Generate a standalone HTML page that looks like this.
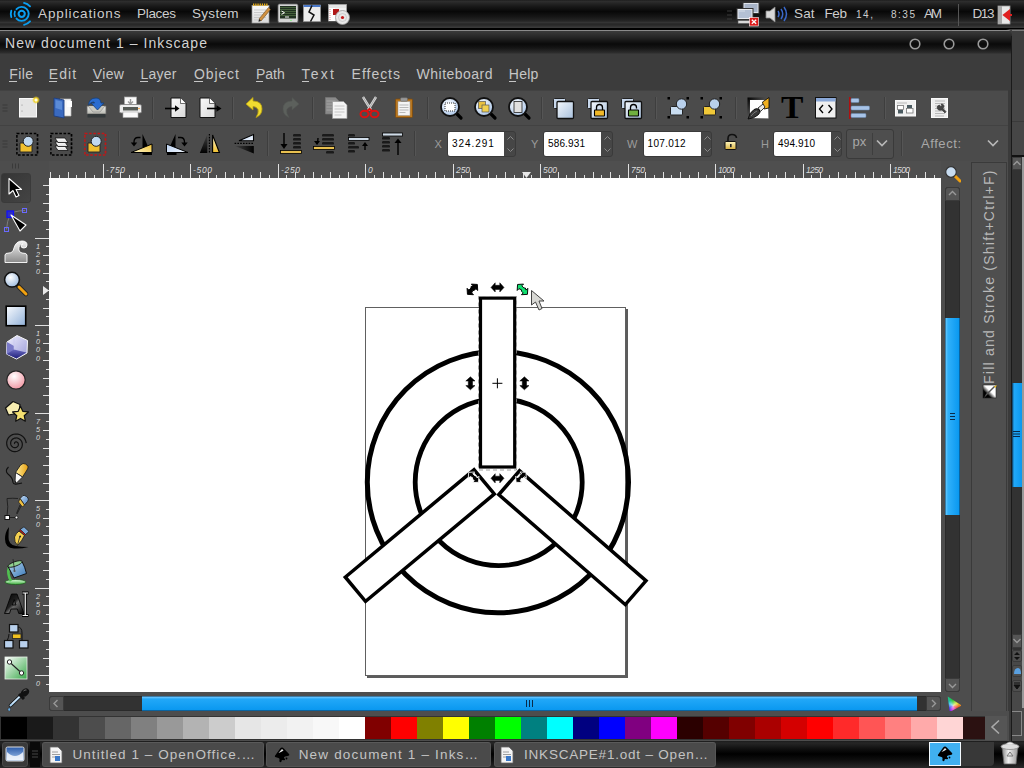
<!DOCTYPE html>
<html><head><meta charset="utf-8">
<style>
*{margin:0;padding:0;box-sizing:border-box}
html,body{width:1024px;height:768px;overflow:hidden;background:#404040;font-family:"Liberation Sans",sans-serif}
.a{position:absolute;display:block}
.t{position:absolute;white-space:nowrap;line-height:1}
</style></head><body>
<div class="a" style="left:0px;top:0px;width:1024px;height:29px;background:linear-gradient(#1f1f1f 0px,#2d2d2d 1.5px,#262626 3px,#161616 7px,#080808 11.5px,#141414 16px,#252525 21px,#343434 22.5px,#262626 24px,#2c2c2c 25.5px,#3a3a3a 27.5px,#000 28px,#000 29px)"></div>
<svg class="a" style="left:4px;top:0px" width="32" height="28" viewBox="0 0 32 28"><g fill="none" stroke="#0a9ef0" stroke-linecap="round">
<circle cx="17.7" cy="13.85" r="3.1" stroke-width="2.1"/>
<path d="M12.50 9.17 A7.0 7.0 0 1 1 12.50 18.53" stroke-width="1.9"/>
<path d="M20.03 2.89 A11.2 11.2 0 0 1 26.02 6.36" stroke-width="1.9"/>
<path d="M26.02 21.34 A11.2 11.2 0 0 1 20.03 24.81" stroke-width="1.9"/>
<path d="M7.28 17.04 A10.9 10.9 0 0 1 7.28 10.66" stroke-width="1.9"/>
<path d="M10.93 16.31 A7.2 7.2 0 0 1 10.93 11.39" stroke-width="1.7"/>
</g></svg>
<div class="t" style="left:38.00px;top:6.57px;font-size:13.5px;color:#cdcdcd;letter-spacing:0.882px;font-family:'Liberation Sans',sans-serif;">Applications</div>
<div class="t" style="left:137.00px;top:6.57px;font-size:13.5px;color:#cdcdcd;letter-spacing:-0.300px;font-family:'Liberation Sans',sans-serif;">Places</div>
<div class="t" style="left:192.00px;top:6.57px;font-size:13.5px;color:#cdcdcd;letter-spacing:0.300px;font-family:'Liberation Sans',sans-serif;">System</div>
<svg class="a" style="left:250px;top:2px" width="22" height="23" viewBox="0 0 22 23"><defs><linearGradient id="np" x1="0" y1="0" x2="0" y2="1"><stop offset="0" stop-color="#fafafa"/><stop offset="1" stop-color="#d8d8d8"/></linearGradient></defs>
<rect x="2" y="3.5" width="17" height="17.5" fill="url(#np)" stroke="#999" stroke-width="0.7"/>
<path d="M3 2.8 h15" stroke="#e8b020" stroke-width="2.6" stroke-dasharray="1.3 0.9"/>
<path d="M4 8h12M4 10.5h12M4 13h12M4 15.5h12M4 18h8" stroke="#bbb" stroke-width="0.7"/>
<path d="M9 17 L18.5 5.5 L20.5 7.5 L11 19 Z" fill="#d09040" stroke="#6a4a20" stroke-width="0.6"/><path d="M9 17 L11 19 L8.5 19.8Z" fill="#222"/></svg>
<svg class="a" style="left:277px;top:3px" width="22" height="21" viewBox="0 0 22 21"><rect x="1" y="1" width="20" height="18.5" rx="1.5" fill="#d4d4d4" stroke="#666" stroke-width="0.8"/>
<rect x="3" y="3" width="16" height="12.5" fill="#203020"/>
<path d="M3 4.5h16M3 6.5h16M3 8.5h16M3 10.5h16M3 12.5h16" stroke="#5a7a4a" stroke-width="0.9" opacity="0.7"/>
<path d="M4.5 8 l3 1.7 -3 1.7" stroke="#fff" stroke-width="1" fill="none"/><path d="M8 14h4" stroke="#fff" stroke-width="1"/>
<circle cx="14" cy="17.3" r="0.6" fill="#4f4"/></svg>
<svg class="a" style="left:302px;top:4px" width="20" height="19" viewBox="0 0 20 19"><rect x="1.5" y="1" width="17" height="16.5" fill="#ececec" stroke="#999" stroke-width="0.7"/>
<rect x="1.5" y="1" width="17" height="2" fill="#4a78c8"/>
<path d="M10 1.5 L7 8 L12 11 L8.5 17.5" stroke="#111" stroke-width="1.5" fill="none"/></svg>
<svg class="a" style="left:327px;top:3px" width="24" height="23" viewBox="0 0 24 23"><rect x="1.5" y="1.5" width="18" height="16.5" fill="#f0f0f0" stroke="#aaa" stroke-width="0.7"/>
<path d="M2 5 H8 V18 H2Z" fill="#fff"/><path d="M2 2 H19 V5 H2Z" fill="#e4e4e4"/>
<rect x="6" y="6" width="6" height="6" fill="#b01818"/>
<path d="M3 6V17" stroke="#c04040" stroke-width="0.6" stroke-dasharray="1 1"/>
<circle cx="15.5" cy="14.5" r="7" fill="#e8e8e8" stroke="#999" stroke-width="0.8"/>
<circle cx="15.5" cy="14.5" r="4" fill="none" stroke="#bbb" stroke-width="0.6"/>
<circle cx="15.5" cy="14.5" r="1.6" fill="#c01818"/></svg>
<svg class="a" style="left:726px;top:8px" width="8" height="14" viewBox="0 0 8 14"><path d="M1 3h5M1 7h5M1 11h5" stroke="#3a3a3a" stroke-width="1.2"/></svg>
<svg class="a" style="left:735px;top:1px" width="28" height="26" viewBox="0 0 28 26"><rect x="8" y="1.5" width="16" height="11" fill="#dfe3ea" stroke="#333" stroke-width="1"/>
<rect x="9.5" y="3" width="13" height="8" fill="#a8b4c8"/>
<rect x="2" y="7.5" width="16" height="11" fill="#e8ebf0" stroke="#333" stroke-width="1"/>
<rect x="3.5" y="9" width="13" height="8" fill="#b4c0d4"/>
<path d="M4 10 L10 10" stroke="#fff" stroke-width="0.8" opacity="0.6"/>
<rect x="3" y="19.5" width="14" height="3" fill="#d8d8d8" stroke="#555" stroke-width="0.6"/>
<rect x="14.5" y="16.5" width="9" height="8.5" fill="#dd1a1a" stroke="#fff" stroke-width="0.6"/>
<path d="M16.8 18.8 l4.4 4 M21.2 18.8 l-4.4 4" stroke="#fff" stroke-width="1.3"/></svg>
<svg class="a" style="left:765px;top:6px" width="23" height="17" viewBox="0 0 23 17"><path d="M1 5 h4 l5 -4 v15 l-5 -4 h-4 z" fill="#d8d8d8" stroke="#888" stroke-width="0.8"/>
<path d="M13 5 q2 3 0 6 M16 3 q3.5 5 0 10 M19 1 q5 7 0 14" stroke="#3a68c8" stroke-width="1.5" fill="none"/></svg>
<div class="t" style="left:794.00px;top:6.57px;font-size:13.5px;color:#cdcdcd;letter-spacing:0.125px;font-family:'Liberation Sans',sans-serif;">Sat</div>
<div class="t" style="left:824.50px;top:6.57px;font-size:13.5px;color:#cdcdcd;letter-spacing:-0.375px;font-family:'Liberation Sans',sans-serif;">Feb</div>
<div class="t" style="left:856.00px;top:10.34px;font-size:10px;color:#cdcdcd;letter-spacing:1.550px;font-family:'Liberation Sans',sans-serif;">14,</div>
<div class="t" style="left:891.00px;top:10.34px;font-size:10px;color:#cdcdcd;letter-spacing:1.517px;font-family:'Liberation Sans',sans-serif;">8:35</div>
<div class="t" style="left:924.00px;top:6.57px;font-size:13.5px;color:#cdcdcd;letter-spacing:-2.250px;font-family:'Liberation Sans',sans-serif;">AM</div>
<div class="a" style="left:958px;top:4px;width:1px;height:22px;background:#555"></div>
<div class="t" style="left:972.50px;top:6.57px;font-size:13.5px;color:#cdcdcd;letter-spacing:-1.375px;font-family:'Liberation Sans',sans-serif;">D13</div>
<svg class="a" style="left:997px;top:5px" width="17" height="20" viewBox="0 0 17 20"><rect x="1" y="1" width="12" height="18" fill="#e8e8e8" stroke="#999" stroke-width="0.8"/>
<rect x="1" y="1" width="4" height="18" fill="#a8a8a8"/>
<path d="M15 10 h-6 M12 6 l-5 4 5 4 z" stroke="#e02020" fill="#e02020" stroke-width="2"/></svg>
<div class="a" style="left:0px;top:29px;width:1012px;height:25px;background:linear-gradient(#000 0px,#000 1px,#8a8a8a 1px,#8a8a8a 2px,#3a3a3a 2px,#262626 8px,#0a0a0a 15px,#151515 19px,#2e2e2e 24px,#3c3c3c 25px);border-top-right-radius:6px"></div>
<div class="t" style="left:5.00px;top:36.45px;font-size:14px;color:#d2d2d2;letter-spacing:1.056px;font-family:'Liberation Sans',sans-serif;">New document 1 – Inkscape</div>
<svg class="a" style="left:908px;top:37px" width="14" height="14" viewBox="0 0 14 14"><circle cx="7" cy="7" r="4.8" fill="none" stroke="#9a9a9a" stroke-width="1.6"/></svg>
<svg class="a" style="left:942px;top:37px" width="14" height="14" viewBox="0 0 14 14"><circle cx="7" cy="7" r="4.8" fill="none" stroke="#9a9a9a" stroke-width="1.6"/></svg>
<svg class="a" style="left:976px;top:37px" width="14" height="14" viewBox="0 0 14 14"><circle cx="7" cy="7" r="4.8" fill="none" stroke="#9a9a9a" stroke-width="1.6"/></svg>
<div class="a" style="left:1012px;top:29px;width:12px;height:712px;background:#464646"></div>
<div class="a" style="left:1012px;top:30px;width:12px;height:1px;background:#7a7a7a"></div>
<div class="a" style="left:1012px;top:31px;width:12px;height:59px;background:#3e3e3e"></div>
<div class="a" style="left:0px;top:54px;width:1011px;height:36px;background:#3c3c3c"></div>
<div class="t" style="left:9.30px;top:67.15px;font-size:14px;color:#c6c6c6;letter-spacing:0.383px;font-family:'Liberation Sans',sans-serif;">File</div>
<div class="t" style="left:48.80px;top:67.15px;font-size:14px;color:#c6c6c6;letter-spacing:1.100px;font-family:'Liberation Sans',sans-serif;">Edit</div>
<div class="t" style="left:92.80px;top:67.15px;font-size:14px;color:#c6c6c6;letter-spacing:0.350px;font-family:'Liberation Sans',sans-serif;">View</div>
<div class="t" style="left:140.40px;top:67.15px;font-size:14px;color:#c6c6c6;letter-spacing:0.225px;font-family:'Liberation Sans',sans-serif;">Layer</div>
<div class="t" style="left:194.00px;top:67.15px;font-size:14px;color:#c6c6c6;letter-spacing:0.870px;font-family:'Liberation Sans',sans-serif;">Object</div>
<div class="t" style="left:256.00px;top:67.15px;font-size:14px;color:#c6c6c6;letter-spacing:-0.033px;font-family:'Liberation Sans',sans-serif;">Path</div>
<div class="t" style="left:301.60px;top:67.15px;font-size:14px;color:#c6c6c6;letter-spacing:2.167px;font-family:'Liberation Sans',sans-serif;">Text</div>
<div class="t" style="left:351.60px;top:67.15px;font-size:14px;color:#c6c6c6;letter-spacing:0.975px;font-family:'Liberation Sans',sans-serif;">Effects</div>
<div class="t" style="left:416.60px;top:67.15px;font-size:14px;color:#c6c6c6;letter-spacing:0.478px;font-family:'Liberation Sans',sans-serif;">Whiteboard</div>
<div class="t" style="left:508.80px;top:67.15px;font-size:14px;color:#c6c6c6;letter-spacing:0.267px;font-family:'Liberation Sans',sans-serif;">Help</div>
<div class="a" style="left:9.3px;top:80.5px;width:7.699999999999999px;height:1.2px;background:#c6c6c6"></div>
<div class="a" style="left:48.8px;top:80.5px;width:7.800000000000004px;height:1.2px;background:#c6c6c6"></div>
<div class="a" style="left:92.8px;top:80.5px;width:9.200000000000003px;height:1.2px;background:#c6c6c6"></div>
<div class="a" style="left:140.4px;top:80.5px;width:7.599999999999994px;height:1.2px;background:#c6c6c6"></div>
<div class="a" style="left:194px;top:80.5px;width:9px;height:1.2px;background:#c6c6c6"></div>
<div class="a" style="left:256px;top:80.5px;width:7px;height:1.2px;background:#c6c6c6"></div>
<div class="a" style="left:301.6px;top:80.5px;width:7.399999999999977px;height:1.2px;background:#c6c6c6"></div>
<div class="a" style="left:380px;top:80.5px;width:6px;height:1.2px;background:#c6c6c6"></div>
<div class="a" style="left:477px;top:80.5px;width:6px;height:1.2px;background:#c6c6c6"></div>
<div class="a" style="left:508.8px;top:80.5px;width:7.199999999999989px;height:1.2px;background:#c6c6c6"></div>
<div class="a" style="left:0px;top:90px;width:1008px;height:35px;background:#4b4b4b;border-top:1px solid #424242"></div>
<div class="a" style="left:0px;top:125px;width:1008px;height:37px;background:#4b4b4b;border-top:1px solid #424242;border-bottom:1px solid #404040"></div>
<svg class="a" style="left:2px;top:104px" width="6" height="8" viewBox="0 0 6 8"><path d="M0.5 1h5M0.5 4h5M0.5 7h5" stroke="#3a3a3a" stroke-width="1"/></svg>
<svg class="a" style="left:2px;top:140px" width="6" height="8" viewBox="0 0 6 8"><path d="M0.5 1h5M0.5 4h5M0.5 7h5" stroke="#3a3a3a" stroke-width="1"/></svg>
<div class="a" style="left:152px;top:97px;width:1px;height:22px;background:#3e3e3e;box-shadow:1px 0 0 #555"></div>
<div class="a" style="left:232px;top:97px;width:1px;height:22px;background:#3e3e3e;box-shadow:1px 0 0 #555"></div>
<div class="a" style="left:312px;top:97px;width:1px;height:22px;background:#3e3e3e;box-shadow:1px 0 0 #555"></div>
<div class="a" style="left:427px;top:97px;width:1px;height:22px;background:#3e3e3e;box-shadow:1px 0 0 #555"></div>
<div class="a" style="left:541px;top:97px;width:1px;height:22px;background:#3e3e3e;box-shadow:1px 0 0 #555"></div>
<div class="a" style="left:655px;top:97px;width:1px;height:22px;background:#3e3e3e;box-shadow:1px 0 0 #555"></div>
<div class="a" style="left:735px;top:97px;width:1px;height:22px;background:#3e3e3e;box-shadow:1px 0 0 #555"></div>
<div class="a" style="left:884px;top:97px;width:1px;height:22px;background:#3e3e3e;box-shadow:1px 0 0 #555"></div>
<svg class="a" style="left:17px;top:96px" width="24" height="24" viewBox="0 0 24 24"><defs><radialGradient id="glow"><stop offset="0" stop-color="#fff8a0"/><stop offset="0.5" stop-color="#f0d020"/><stop offset="1" stop-color="#f0d020" stop-opacity="0"/></radialGradient></defs>
<rect x="2.5" y="2.5" width="17" height="18.5" fill="#e4e4e4" stroke="#fafafa" stroke-width="1"/>
<circle cx="5" cy="9" r="0.6" fill="#888"/><circle cx="5" cy="15" r="0.6" fill="#888"/>
<circle cx="19" cy="4" r="4" fill="url(#glow)"/><circle cx="19" cy="4" r="1.5" fill="#fffce0"/></svg>
<svg class="a" style="left:52px;top:96px" width="22" height="23" viewBox="0 0 22 23"><path d="M8 3 h11 v17 h-11 z" fill="#f8f8f8" stroke="#bbb" stroke-width="0.7"/>
<rect x="15" y="5" width="5" height="6" fill="#fff"/>
<path d="M2 2 L12 4 L12 22 L2 20 Z" fill="#3a6ac0" stroke="#1e3e80" stroke-width="0.9"/>
<path d="M3.5 4 L10 5.5 L10 14 L3.5 12 Z" fill="#6a9ae0" opacity="0.7"/></svg>
<svg class="a" style="left:85px;top:96px" width="23" height="23" viewBox="0 0 23 23"><defs><linearGradient id="svt" x1="0" y1="0" x2="0" y2="1"><stop offset="0" stop-color="#f0f0ec"/><stop offset="1" stop-color="#b8b8b0"/></linearGradient></defs>
<path d="M2 10 h19 v8 h-19 z" fill="url(#svt)" stroke="#666" stroke-width="0.8"/>
<path d="M3 10 l5 6 h7 l5 -6" fill="#c8c8c0" stroke="#888" stroke-width="0.6"/>
<rect x="2.5" y="18" width="18" height="3.5" rx="0.5" fill="#33393b"/>
<path d="M3.5 9 Q4 2 11 2 Q15.5 2 16 7 L19 7 L12.5 14 L6 7 L9.5 7 Q9 5.5 8 6 Q5 7 3.5 9 Z" fill="#2a6cd0" stroke="#15407a" stroke-width="0.8" stroke-linejoin="round"/></svg>
<svg class="a" style="left:118px;top:96px" width="25" height="23" viewBox="0 0 25 23"><rect x="6.5" y="1" width="12" height="9" fill="#fafafa" stroke="#aaa" stroke-width="0.7"/>
<path d="M12.5 3 v4.5 M10 5.5 l2.5 2.5 2.5 -2.5" stroke="#999" stroke-width="1.4" fill="none"/>
<rect x="1.5" y="8.5" width="22" height="8.5" rx="1.5" fill="#ececec" stroke="#777" stroke-width="0.8"/>
<rect x="5" y="11" width="15" height="3.5" fill="#555a55"/>
<rect x="5" y="16" width="15" height="5.5" fill="#fafafa" stroke="#aaa" stroke-width="0.6"/>
<circle cx="21" cy="12.5" r="0.7" fill="#f80"/></svg>
<svg class="a" style="left:163px;top:96px" width="25" height="24" viewBox="0 0 25 24"><defs><linearGradient id="pg" x1="0" y1="0" x2="1" y2="1"><stop offset="0" stop-color="#fafafa"/><stop offset="1" stop-color="#d8d8d8"/></linearGradient></defs>
<path d="M8 2 h9.5 l5.5 5.5 v14 h-15 z" fill="url(#pg)" stroke="#111" stroke-width="1"/>
<path d="M17.5 2 v5.5 h5.5" fill="#fff" stroke="#333" stroke-width="0.7"/>
<path d="M2 12.5 h12" stroke="#000" stroke-width="1.6"/><path d="M16.5 12.5 l-4.5 -3.3 v6.6z" fill="#000"/></svg>
<svg class="a" style="left:198px;top:96px" width="25" height="24" viewBox="0 0 25 24"><path d="M2 2 h9.5 l5.5 5.5 v14 h-15 z" fill="url(#pg)" stroke="#111" stroke-width="1"/>
<path d="M11.5 2 v5.5 h5.5" fill="#fff" stroke="#333" stroke-width="0.7"/>
<path d="M9 12.5 h10" stroke="#000" stroke-width="1.6"/><path d="M23.5 12.5 l-5 -3.3 v6.6z" fill="#000"/></svg>
<svg class="a" style="left:244px;top:96px" width="21" height="23" viewBox="0 0 21 23"><path d="M2 8 L9 1.5 L9 5 Q18 5 18 13 Q18 19 12 21.5 Q15 17 14 13.5 Q12.5 10.5 9 10.5 L9 14 Z" fill="#f0dc30" stroke="#b8a010" stroke-width="0.8"/></svg>
<svg class="a" style="left:281px;top:96px" width="20" height="23" viewBox="0 0 20 23"><path d="M18 8 L11 1.5 L11 5 Q2 5 2 13 Q2 19 8 21.5 Q5 17 6 13.5 Q7.5 10.5 11 10.5 L11 14 Z" fill="#5c605c" stroke="#525552" stroke-width="0.6"/></svg>
<svg class="a" style="left:324px;top:96px" width="25" height="24" viewBox="0 0 25 24"><path d="M1.5 1.5 h10 l3 3 v13.5 h-13 z" fill="#8a8a8a" stroke="#777" stroke-width="0.7"/>
<path d="M2.5 5h9M2.5 8h9M2.5 11h9M2.5 14h9" stroke="#aaa" stroke-width="0.8"/>
<path d="M8.5 5.5 h11 l3.5 3.5 v13.5 h-14.5 z" fill="#f4f4f4" stroke="#999" stroke-width="0.7"/>
<path d="M10.5 10h10M10.5 13h10M10.5 16h10M10.5 19h7" stroke="#bbb" stroke-width="0.8"/></svg>
<svg class="a" style="left:359px;top:96px" width="21" height="23" viewBox="0 0 21 23"><path d="M4 1 L12 14 M17 1 L9 14" stroke="#d8d8d8" stroke-width="2.4"/>
<path d="M4 1 L12 14 M17 1 L9 14" stroke="#888" stroke-width="0.6"/>
<ellipse cx="5.5" cy="18" rx="4" ry="3.3" fill="none" stroke="#dd1010" stroke-width="2"/>
<ellipse cx="15.5" cy="18" rx="4" ry="3.3" fill="none" stroke="#dd1010" stroke-width="2"/>
<path d="M8 15 L10.5 13 L13 15" stroke="#dd1010" stroke-width="2" fill="none"/></svg>
<svg class="a" style="left:394px;top:97px" width="20" height="22" viewBox="0 0 20 22"><rect x="1.5" y="2" width="17" height="18.5" rx="1" fill="#b8761e" stroke="#7a4a10" stroke-width="0.8"/>
<rect x="4" y="4.5" width="12" height="14" fill="#f4f4f4" stroke="#999" stroke-width="0.5"/>
<rect x="6.5" y="0.7" width="7" height="3.5" rx="1" fill="#999" stroke="#666" stroke-width="0.6"/>
<path d="M5.5 8h9M5.5 10.5h9M5.5 13h9M5.5 15.5h6" stroke="#aaa" stroke-width="0.8"/></svg>
<svg class="a" style="left:438px;top:94.5px" width="26" height="26" viewBox="0 0 26 26"><defs><radialGradient id="zg450" cx="0.4" cy="0.35" r="0.7"><stop offset="0" stop-color="#ffffff"/><stop offset="1" stop-color="#a8c4e8"/></radialGradient></defs>
<path d="M18.5 18.5 L23 23" stroke="#000" stroke-width="3.2" stroke-linecap="round"/>
<circle cx="12" cy="12" r="9" fill="url(#zg450)" stroke="#111" stroke-width="1.8"/><rect x="7" y="8" width="10" height="8" fill="#fff" stroke="#000" stroke-width="0.8" stroke-dasharray="1 1"/></svg>
<svg class="a" style="left:472px;top:94.5px" width="26" height="26" viewBox="0 0 26 26"><defs><radialGradient id="zg484" cx="0.4" cy="0.35" r="0.7"><stop offset="0" stop-color="#ffffff"/><stop offset="1" stop-color="#a8c4e8"/></radialGradient></defs>
<path d="M18.5 18.5 L23 23" stroke="#000" stroke-width="3.2" stroke-linecap="round"/>
<circle cx="12" cy="12" r="9" fill="url(#zg484)" stroke="#111" stroke-width="1.8"/><rect x="6.5" y="6.5" width="7" height="7" fill="#e8c040" stroke="#555" stroke-width="0.7"/><rect x="10" y="10" width="7" height="7" fill="#f0d050" stroke="#555" stroke-width="0.7"/></svg>
<svg class="a" style="left:506px;top:94.5px" width="26" height="26" viewBox="0 0 26 26"><defs><radialGradient id="zg518" cx="0.4" cy="0.35" r="0.7"><stop offset="0" stop-color="#ffffff"/><stop offset="1" stop-color="#a8c4e8"/></radialGradient></defs>
<path d="M18.5 18.5 L23 23" stroke="#000" stroke-width="3.2" stroke-linecap="round"/>
<circle cx="12" cy="12" r="9" fill="url(#zg518)" stroke="#111" stroke-width="1.8"/><rect x="8" y="6.5" width="8" height="11" fill="#e0e0e0" stroke="#222" stroke-width="0.8"/></svg>
<svg class="a" style="left:552px;top:96px" width="24" height="24" viewBox="0 0 24 24"><defs><linearGradient id="sq552" x1="0" y1="0" x2="1" y2="1"><stop offset="0" stop-color="#f4f8fc"/><stop offset="1" stop-color="#a8c0dc"/></linearGradient></defs>
<rect x="1.5" y="2.5" width="12" height="10" rx="1" fill="#c8d8ec" stroke="#222" stroke-width="1"/>
<rect x="5" y="5.5" width="16.5" height="17" rx="1" fill="url(#sq552)" stroke="#111" stroke-width="1.3"/></svg>
<svg class="a" style="left:586px;top:96px" width="24" height="24" viewBox="0 0 24 24"><defs><linearGradient id="sq586" x1="0" y1="0" x2="1" y2="1"><stop offset="0" stop-color="#f4f8fc"/><stop offset="1" stop-color="#a8c0dc"/></linearGradient></defs>
<rect x="1.5" y="2.5" width="12" height="10" rx="1" fill="#c8d8ec" stroke="#222" stroke-width="1"/>
<rect x="5" y="5.5" width="16.5" height="17" rx="1" fill="url(#sq586)" stroke="#111" stroke-width="1.3"/><rect x="8.5" y="14" width="10" height="6" rx="0.5" fill="#f0b828" stroke="#000" stroke-width="1.1"/><path d="M10.5 14 v-2.5 a3 3 0 0 1 6 0 v2.5" fill="none" stroke="#000" stroke-width="1.3"/></svg>
<svg class="a" style="left:620px;top:96px" width="24" height="24" viewBox="0 0 24 24"><defs><linearGradient id="sq620" x1="0" y1="0" x2="1" y2="1"><stop offset="0" stop-color="#f4f8fc"/><stop offset="1" stop-color="#a8c0dc"/></linearGradient></defs>
<rect x="1.5" y="2.5" width="12" height="10" rx="1" fill="#c8d8ec" stroke="#222" stroke-width="1"/>
<rect x="5" y="5.5" width="16.5" height="17" rx="1" fill="url(#sq620)" stroke="#111" stroke-width="1.3"/><rect x="8.5" y="14" width="10" height="6" rx="0.5" fill="#70b040" stroke="#000" stroke-width="1.1"/><path d="M10.5 14 v-2.5 a3 3 0 0 1 6 0 v1" fill="none" stroke="#000" stroke-width="1.3"/></svg>
<svg class="a" style="left:667px;top:96px" width="24" height="24" viewBox="0 0 24 24"><g fill="#000"><rect x="0.5" y="1" width="2.5" height="2.5"/><rect x="19.5" y="1" width="2.5" height="2.5"/><rect x="0.5" y="20" width="2.5" height="2.5"/><rect x="19.5" y="20" width="2.5" height="2.5"/></g>
<rect x="3.5" y="10.5" width="12" height="8.5" rx="1" fill="#c8dcf0" stroke="#222" stroke-width="1"/>
<circle cx="14.5" cy="8" r="5.2" fill="#b8d0ec" stroke="#222" stroke-width="1"/></svg>
<svg class="a" style="left:700px;top:96px" width="24" height="24" viewBox="0 0 24 24"><g fill="#000"><rect x="0.5" y="1" width="2.5" height="2.5"/><rect x="19.5" y="1" width="2.5" height="2.5"/><rect x="0.5" y="20" width="2.5" height="2.5"/><rect x="19.5" y="20" width="2.5" height="2.5"/></g>
<rect x="3.5" y="10.5" width="12" height="8.5" rx="1" fill="#f0c838" stroke="#222" stroke-width="1"/>
<circle cx="14.5" cy="8" r="5.2" fill="#b8d0ec" stroke="#222" stroke-width="1"/></svg>
<svg class="a" style="left:746px;top:96px" width="25" height="24" viewBox="0 0 25 24"><defs><linearGradient id="fsf" x1="0" y1="0" x2="1" y2="1"><stop offset="0" stop-color="#000"/><stop offset="0.5" stop-color="#555"/><stop offset="1" stop-color="#ddd"/></linearGradient></defs>
<rect x="1.5" y="1.5" width="21" height="21" fill="url(#fsf)"/>
<rect x="4" y="4" width="18" height="18" fill="#fff"/>
<path d="M1.5 22.5 L22.5 1.5 L22.5 14 Q16 20 11 22.5 Z" fill="#111" opacity="0.0"/>
<path d="M16.5 6 L23 1.5 L23 12 L18 13 Z" fill="#f0b020" stroke="#000" stroke-width="0.8"/>
<path d="M12 12 L17 8 L19 11 L14.5 15.5 Z" fill="#e8e8e8" stroke="#222" stroke-width="0.9"/>
<path d="M2 23 Q3 17 8 13.5 Q11 11.5 13.5 14 Q15 16.5 12 19 Q8 22.5 2 23 Z" fill="#3a3a3a" stroke="#000" stroke-width="0.8"/>
<path d="M5 20 Q8 16 11 15" stroke="#888" stroke-width="0.8" fill="none"/></svg>
<div class="t" style="left:780.80px;top:91.76px;font-size:31px;color:#000;letter-spacing:0.000px;font-family:'Liberation Serif',serif;font-weight:bold;transform:scaleX(1.08);transform-origin:0 0">T</div>
<svg class="a" style="left:814px;top:96px" width="24" height="24" viewBox="0 0 24 24"><rect x="1.5" y="1.5" width="20.5" height="20.5" fill="#f0f0f0" stroke="#111" stroke-width="1"/>
<rect x="2" y="2" width="19.5" height="3.5" fill="#8aa8d8"/>
<path d="M9 9 L5.5 13 L9 17 M14.5 9 L18 13 L14.5 17" fill="none" stroke="#000" stroke-width="1.3"/></svg>
<svg class="a" style="left:848px;top:96px" width="24" height="24" viewBox="0 0 24 24"><rect x="1" y="1" width="1.6" height="22" fill="#b01010"/>
<rect x="3" y="2.5" width="8" height="4" rx="1" fill="#a8c4e8" stroke="#6a88b0" stroke-width="0.5"/>
<rect x="3" y="10" width="18.5" height="4" rx="1" fill="#a8c4e8" stroke="#6a88b0" stroke-width="0.5"/>
<rect x="3" y="17.5" width="15" height="4" rx="1" fill="#a8c4e8" stroke="#6a88b0" stroke-width="0.5"/></svg>
<svg class="a" style="left:894px;top:99px" width="24" height="19" viewBox="0 0 24 19"><rect x="1.5" y="1.5" width="20" height="15.5" fill="#f0f0f0" stroke="#fafafa" stroke-width="1"/>
<rect x="3" y="3" width="10" height="2" fill="#d4d4d4"/>
<rect x="3.5" y="6.5" width="6" height="4" fill="#fff" stroke="#777" stroke-width="0.8"/>
<rect x="4" y="11" width="5" height="3.5" fill="#4a5a60"/>
<rect x="13" y="6" width="5" height="3" fill="#4a5a60"/>
<rect x="12.5" y="9.5" width="6.5" height="4.5" fill="#fff" stroke="#777" stroke-width="0.8"/></svg>
<svg class="a" style="left:930px;top:97px" width="20" height="22" viewBox="0 0 20 22"><rect x="1.5" y="1.5" width="16" height="19" fill="#eeeeee" stroke="#fafafa" stroke-width="1"/>
<path d="M5 4h10M5 6.5h10M5 9h10M5 11.5h10M5 14h10M5 16.5h10M5 19h9" stroke="#aaa" stroke-width="0.8"/>
<path d="M7 11 Q7 8.5 9.5 8 L10.5 9.5 L12 8.5 L11 7 Q13.5 6.5 14 9 Q14 10.5 13 11.5 L16 14.5 L15 16 L12 13 Q10 13.5 8.5 13 Z" fill="#444" stroke="#333" stroke-width="0.6"/></svg>
<div class="a" style="left:118px;top:131px;width:1px;height:25px;background:#3e3e3e;box-shadow:1px 0 0 #555"></div>
<div class="a" style="left:267px;top:131px;width:1px;height:25px;background:#3e3e3e;box-shadow:1px 0 0 #555"></div>
<div class="a" style="left:414px;top:131px;width:1px;height:25px;background:#3e3e3e;box-shadow:1px 0 0 #555"></div>
<div class="a" style="left:901px;top:131px;width:1px;height:25px;background:#3e3e3e;box-shadow:1px 0 0 #555"></div>
<svg class="a" style="left:49px;top:131px" width="24" height="26" viewBox="0 0 24 26"><rect x="1.9" y="2.5" width="20.5" height="21.5" fill="none" stroke="#000" stroke-width="1.5" stroke-dasharray="2.6 1.6"/><path d="M22.9 3 V24" stroke="#000" stroke-width="1" stroke-dasharray="2.6 1.6" opacity="0.6"/><defs><linearGradient id="lyr" x1="0" y1="0" x2="0" y2="1"><stop offset="0" stop-color="#fff"/><stop offset="1" stop-color="#ddd"/></linearGradient></defs>
<path d="M6 15 L16 15 L19 19.5 L9 19.5 Z" fill="url(#lyr)" stroke="#111" stroke-width="0.8"/>
<path d="M6 11 L16 11 L19 15.5 L9 15.5 Z" fill="url(#lyr)" stroke="#111" stroke-width="0.8"/>
<path d="M6 7 L16 7 L19 11.5 L9 11.5 Z" fill="url(#lyr)" stroke="#111" stroke-width="0.8"/></svg>
<svg class="a" style="left:15px;top:131px" width="24" height="26" viewBox="0 0 24 26"><rect x="1.9" y="2.5" width="20.5" height="21.5" fill="none" stroke="#000" stroke-width="1.5" stroke-dasharray="2.6 1.6"/><path d="M22.9 3 V24" stroke="#000" stroke-width="1" stroke-dasharray="2.6 1.6" opacity="0.6"/><path d="M5 12 h3.5 l1 1.5 h7.5 v7.5 h-12 z" fill="#f0c030" stroke="#222" stroke-width="0.9"/><circle cx="13.2" cy="10.3" r="5" fill="#c0d8f0" stroke="#222" stroke-width="1"/></svg>
<svg class="a" style="left:83px;top:131px" width="24" height="26" viewBox="0 0 24 26"><rect x="1.9" y="2.5" width="20.5" height="21.5" fill="none" stroke="#c01818" stroke-width="1.5" stroke-dasharray="2.6 1.6"/><path d="M22.9 3 V24" stroke="#c01818" stroke-width="1" stroke-dasharray="2.6 1.6" opacity="0.6"/><path d="M5 12 h3.5 l1 1.5 h7.5 v7.5 h-12 z" fill="#f0c030" stroke="#222" stroke-width="0.9"/><circle cx="13.2" cy="10.3" r="5" fill="#c0d8f0" stroke="#222" stroke-width="1"/></svg>
<svg class="a" style="left:129px;top:131px" width="26" height="26" viewBox="0 0 26 26"><defs><linearGradient id="ylw" x1="0" y1="1" x2="1" y2="0"><stop offset="0" stop-color="#fff8d0"/><stop offset="1" stop-color="#f0c030"/></linearGradient><linearGradient id="blu" x1="0" y1="0" x2="1" y2="1"><stop offset="0" stop-color="#b8d0f0"/><stop offset="1" stop-color="#f4f8ff"/></linearGradient></defs>
<path d="M13.5 3 L13.5 16.5 L19.5 16.5 Z" fill="#000"/>
<rect x="13.5" y="20.5" width="9.5" height="3.5" fill="#000"/>
<path d="M2 21.5 L23 21.5 L23 13 Z" fill="url(#ylw)" stroke="#000" stroke-width="1"/>
<path d="M11.5 6.5 H9 Q5 6.5 5 11 V13" fill="none" stroke="#000" stroke-width="1.3"/><path d="M1.8 11.5 L5 15.5 L8.2 11.5z" fill="#000"/></svg>
<svg class="a" style="left:164px;top:131px" width="26" height="26" viewBox="0 0 26 26">
<path d="M11.5 3 L11.5 16.5 L5.5 16.5 Z" fill="#000"/>
<rect x="3" y="20.5" width="9.5" height="3.5" fill="#000"/>
<path d="M2.5 13 L2.5 21.5 L24 21.5 Z" fill="url(#blu)" stroke="#000" stroke-width="1"/>
<path d="M14 6.5 H16.5 Q20.5 6.5 20.5 11 V13" fill="none" stroke="#000" stroke-width="1.3"/><path d="M17.3 11.5 L20.5 15.5 L23.7 11.5z" fill="#000"/></svg>
<svg class="a" style="left:198px;top:131px" width="24" height="26" viewBox="0 0 24 26"><defs><linearGradient id="fgv" x1="0" y1="0" x2="0" y2="1"><stop offset="0" stop-color="#000" stop-opacity="0.1"/><stop offset="1" stop-color="#000"/></linearGradient><linearGradient id="fgh" x1="0" y1="0" x2="1" y2="0"><stop offset="0" stop-color="#000" stop-opacity="0.1"/><stop offset="1" stop-color="#000"/></linearGradient><linearGradient id="fyl" x1="0" y1="0" x2="0" y2="1"><stop offset="0" stop-color="#fff8d8"/><stop offset="1" stop-color="#f0c030"/></linearGradient></defs>
<path d="M9.3 3.3 L9.3 22 L1.8 22 Z" fill="url(#fgv)"/>
<path d="M11.4 3 V22.5" stroke="#000" stroke-width="1.2" stroke-dasharray="1.6 1.2"/>
<path d="M14.6 4 L14.6 21.5 L21.4 21.5 Z" fill="url(#fyl)" stroke="#000" stroke-width="1.1"/></svg>
<svg class="a" style="left:233px;top:131px" width="24" height="26" viewBox="0 0 24 26"><path d="M20.5 3.5 L20.5 9.8 L6 9.8 Z" fill="url(#blu)" stroke="#000" stroke-width="1.1"/>
<path d="M1.6 12.3 H21" stroke="#000" stroke-width="1.2" stroke-dasharray="1.6 1.2"/>
<path d="M2 15 L20.8 15 L20.8 22.5 Z" fill="url(#fgh)"/></svg>
<svg class="a" style="left:279px;top:131px" width="24" height="26" viewBox="0 0 24 26"><rect x="14" y="3" width="8" height="2.6" rx="1.2" fill="#1a1a1a"/><rect x="14" y="7" width="8" height="2.6" rx="1.2" fill="#1a1a1a"/><rect x="14" y="11" width="8" height="2.6" rx="1.2" fill="#1a1a1a"/><rect x="14" y="15" width="8" height="2.6" rx="1.2" fill="#1a1a1a"/><rect x="1.5" y="19.5" width="21" height="3" fill="#e8c050" stroke="#000" stroke-width="0.8"/><path d="M5 2 V16" stroke="#000" stroke-width="1.4"/><path d="M1.5 13 L5 18 L8.5 13z" fill="#000"/></svg>
<svg class="a" style="left:312px;top:131px" width="24" height="26" viewBox="0 0 24 26"><rect x="10" y="3" width="12" height="2.6" rx="1.2" fill="#1a1a1a"/><rect x="10" y="7" width="12" height="2.6" rx="1.2" fill="#1a1a1a"/><rect x="10" y="11" width="12" height="2.6" rx="1.2" fill="#1a1a1a"/><rect x="14" y="20" width="8" height="2.6" rx="1.2" fill="#1a1a1a"/><rect x="1.5" y="15.5" width="21" height="3" fill="#e8c050" stroke="#000" stroke-width="0.8"/><path d="M6 7 q0 4 -1 6" stroke="#000" stroke-width="1.4" fill="none"/><path d="M2 10 L5 14 L8 10z" fill="#000"/></svg>
<svg class="a" style="left:347px;top:131px" width="24" height="26" viewBox="0 0 24 26"><rect x="1" y="3" width="7" height="2.6" rx="1.2" fill="#1a1a1a"/><rect x="1" y="11" width="7" height="2.6" rx="1.2" fill="#1a1a1a"/><rect x="1" y="15" width="11" height="2.6" rx="1.2" fill="#1a1a1a"/><rect x="1" y="19" width="7" height="2.6" rx="1.2" fill="#1a1a1a"/><rect x="1.5" y="6.5" width="20.5" height="3" fill="#d0dce8" stroke="#000" stroke-width="0.8"/><path d="M18 19 q0 -4 0 -6" stroke="#000" stroke-width="1.4" fill="none"/><path d="M15 15 L18 11 L21 15z" fill="#000"/></svg>
<svg class="a" style="left:381px;top:131px" width="24" height="26" viewBox="0 0 24 26"><rect x="1" y="6" width="8" height="2.6" rx="1.2" fill="#1a1a1a"/><rect x="1" y="10" width="8" height="2.6" rx="1.2" fill="#1a1a1a"/><rect x="1" y="14" width="8" height="2.6" rx="1.2" fill="#1a1a1a"/><rect x="1" y="18" width="8" height="2.6" rx="1.2" fill="#1a1a1a"/><rect x="1.5" y="2" width="20" height="3" fill="#d0dce8" stroke="#000" stroke-width="0.8"/><path d="M17 9 V24" stroke="#000" stroke-width="1.4"/><path d="M13.5 12 L17 7.5 L20.5 12z" fill="#000"/></svg>
<div class="t" style="left:434.40px;top:139.09px;font-size:11px;color:#9c9c9c;letter-spacing:0.000px;font-family:'Liberation Sans',sans-serif;">X</div><div class="a" style="left:446.5px;top:131px;width:69.5px;height:26px;background:#464646;border:1px solid #3a3a3a;border-radius:3px"></div><div class="a" style="left:447.5px;top:132px;width:56.89999999999998px;height:24px;background:#fff;border-radius:2px 0 0 2px"></div><svg class="a" style="left:505.4px;top:133px" width="11" height="22" viewBox="0 0 11 22"><path d="M2.5 6.5 L5.5 3.5 L8.5 6.5 M2.5 15.5 L5.5 18.5 L8.5 15.5" fill="none" stroke="#8a8a8a" stroke-width="1"/></svg><div class="t" style="left:452.00px;top:138.73px;font-size:10px;color:#000;letter-spacing:0.933px;font-family:'Liberation Sans',sans-serif;">324.291</div>
<div class="t" style="left:531.00px;top:139.09px;font-size:11px;color:#9c9c9c;letter-spacing:0.000px;font-family:'Liberation Sans',sans-serif;">Y</div><div class="a" style="left:543.4px;top:131px;width:69.60000000000002px;height:26px;background:#464646;border:1px solid #3a3a3a;border-radius:3px"></div><div class="a" style="left:544.4px;top:132px;width:56.60000000000002px;height:24px;background:#fff;border-radius:2px 0 0 2px"></div><svg class="a" style="left:602px;top:133px" width="11" height="22" viewBox="0 0 11 22"><path d="M2.5 6.5 L5.5 3.5 L8.5 6.5 M2.5 15.5 L5.5 18.5 L8.5 15.5" fill="none" stroke="#8a8a8a" stroke-width="1"/></svg><div class="t" style="left:548.00px;top:138.73px;font-size:10px;color:#000;letter-spacing:0.142px;font-family:'Liberation Sans',sans-serif;">586.931</div>
<div class="t" style="left:627.00px;top:139.09px;font-size:11px;color:#9c9c9c;letter-spacing:0.000px;font-family:'Liberation Sans',sans-serif;">W</div><div class="a" style="left:642.75px;top:131px;width:69.25px;height:26px;background:#464646;border:1px solid #3a3a3a;border-radius:3px"></div><div class="a" style="left:643.75px;top:132px;width:56.85000000000002px;height:24px;background:#fff;border-radius:2px 0 0 2px"></div><svg class="a" style="left:701.6px;top:133px" width="11" height="22" viewBox="0 0 11 22"><path d="M2.5 6.5 L5.5 3.5 L8.5 6.5 M2.5 15.5 L5.5 18.5 L8.5 15.5" fill="none" stroke="#8a8a8a" stroke-width="1"/></svg><div class="t" style="left:647.50px;top:138.73px;font-size:10px;color:#000;letter-spacing:0.325px;font-family:'Liberation Sans',sans-serif;">107.012</div>
<div class="t" style="left:761.00px;top:139.09px;font-size:11px;color:#9c9c9c;letter-spacing:0.000px;font-family:'Liberation Sans',sans-serif;">H</div><div class="a" style="left:772.75px;top:131px;width:69.25px;height:26px;background:#464646;border:1px solid #3a3a3a;border-radius:3px"></div><div class="a" style="left:773.75px;top:132px;width:56.85000000000002px;height:24px;background:#fff;border-radius:2px 0 0 2px"></div><svg class="a" style="left:831.6px;top:133px" width="11" height="22" viewBox="0 0 11 22"><path d="M2.5 6.5 L5.5 3.5 L8.5 6.5 M2.5 15.5 L5.5 18.5 L8.5 15.5" fill="none" stroke="#8a8a8a" stroke-width="1"/></svg><div class="t" style="left:778.00px;top:138.73px;font-size:10px;color:#000;letter-spacing:0.142px;font-family:'Liberation Sans',sans-serif;">494.910</div>
<svg class="a" style="left:723px;top:133px" width="17" height="19" viewBox="0 0 17 19"><defs><linearGradient id="lk" x1="0" y1="0" x2="0" y2="1"><stop offset="0" stop-color="#fff8c0"/><stop offset="1" stop-color="#d8b040"/></linearGradient></defs>
<path d="M5 9 V5.5 Q5 1.5 9 1.5 Q13 1.5 13.5 5" fill="none" stroke="#111" stroke-width="1.6"/>
<rect x="2" y="8.5" width="11" height="8" rx="1" fill="url(#lk)" stroke="#111" stroke-width="1"/>
<rect x="7" y="11" width="1.6" height="3.2" fill="#222"/></svg>
<div class="a" style="left:846px;top:129px;width:48px;height:30px;background:#4e4e4e;border:1px solid #3a3a3a;border-radius:3px"></div>
<div class="a" style="left:872px;top:133px;width:1px;height:22px;background:#3e3e3e"></div>
<div class="t" style="left:852.50px;top:135.00px;font-size:13px;color:#a8a8a8;letter-spacing:0.000px;font-family:'Liberation Sans',sans-serif;">px</div>
<svg class="a" style="left:875px;top:138px" width="14" height="10" viewBox="0 0 14 10"><path d="M2 2.5 L7 7.5 L12 2.5" fill="none" stroke="#b8b8b8" stroke-width="1.7"/></svg>
<div class="t" style="left:921.00px;top:137.40px;font-size:13px;color:#a8a8a8;letter-spacing:0.567px;font-family:'Liberation Sans',sans-serif;">Affect:</div>
<svg class="a" style="left:986px;top:138px" width="14" height="10" viewBox="0 0 14 10"><path d="M2 2.5 L7 7.5 L12 2.5" fill="none" stroke="#b8b8b8" stroke-width="1.7"/></svg>
<div class="a" style="left:0px;top:161px;width:970px;height:554px;background:#4d4d4d"></div>
<svg class="a" style="left:11px;top:163px" width="10" height="6" viewBox="0 0 10 6"><path d="M1.5 0.5v5M4.5 0.5v5M7.5 0.5v5" stroke="#3a3a3a" stroke-width="1"/></svg>
<div class="a" style="left:1px;top:173px;width:30px;height:30px;background:linear-gradient(135deg,#353535,#444);border:1px solid #3a3a3a;border-radius:3px"></div>
<svg class="a" style="left:6px;top:177px" width="20" height="22" viewBox="0 0 20 22"><path d="M3 1.5 L3 17 L7 13.5 L10 20 L13 18.5 L10 12.5 L15.5 12.5 Z" fill="#000" stroke="#fff" stroke-width="1.1" stroke-linejoin="round"/></svg>
<svg class="a" style="left:3px;top:207px" width="26" height="26" viewBox="0 0 26 26"><path d="M7 8 Q9 4 22 3.5 M7 8 Q4 14 3.5 22.5" fill="none" stroke="#888" stroke-width="0.8"/>
<rect x="4" y="4" width="6.5" height="6.5" fill="#3030c0" stroke="#1010ff" stroke-width="1.2"/>
<rect x="19.5" y="1.5" width="4" height="4" fill="none" stroke="#6a6aff" stroke-width="1"/>
<rect x="1.5" y="20.5" width="4" height="4" fill="none" stroke="#6a6aff" stroke-width="1"/>
<path d="M8 8 L23 18 L17 24 Z" fill="#000" stroke="#fff" stroke-width="1.1" stroke-linejoin="round"/></svg>
<svg class="a" style="left:4px;top:239px" width="25" height="26" viewBox="0 0 25 26"><defs><linearGradient id="tw" x1="0" y1="0" x2="0" y2="1"><stop offset="0" stop-color="#f4f4f4"/><stop offset="1" stop-color="#8a8a8a"/></linearGradient></defs>
<path d="M1 23.5 V16 Q1 14 5 14 Q9 14 10 9 Q12 2 18 2 Q23 2 23 6 Q23 9 20 9 Q17 9 17 7 Q17 5 19 5 Q16 4 15 8 Q14 13 18 14 Q23 14 23 16 V23.5 Z" fill="url(#tw)" stroke="#fff" stroke-width="0.9"/></svg>
<svg class="a" style="left:2px;top:270px" width="28" height="28" viewBox="0 0 28 28"><defs><radialGradient id="zt" cx="0.4" cy="0.35" r="0.7"><stop offset="0" stop-color="#fff"/><stop offset="1" stop-color="#9ab8dc"/></radialGradient></defs>
<path d="M16 16 L24 24" stroke="#222" stroke-width="4.6" stroke-linecap="round"/>
<path d="M17 17 L24 24" stroke="#f0a010" stroke-width="3" stroke-linecap="round"/>
<circle cx="10" cy="9.7" r="7.4" fill="url(#zt)" stroke="#111" stroke-width="1.5"/></svg>
<svg class="a" style="left:4px;top:304px" width="24" height="24" viewBox="0 0 24 24"><defs><linearGradient id="rc" x1="0" y1="0" x2="1" y2="1"><stop offset="0" stop-color="#fafcff"/><stop offset="1" stop-color="#90b0d8"/></linearGradient></defs>
<rect x="2.2" y="2.2" width="19.5" height="19.5" fill="url(#rc)" stroke="#000" stroke-width="1.6"/></svg>
<svg class="a" style="left:4px;top:334px" width="25" height="27" viewBox="0 0 25 27"><defs><linearGradient id="bx" x1="0" y1="0" x2="1" y2="1"><stop offset="0" stop-color="#f0f0ff"/><stop offset="1" stop-color="#9a9ad8"/></linearGradient><linearGradient id="bxd" x1="0" y1="0" x2="0" y2="1"><stop offset="0" stop-color="#6a6ac0"/><stop offset="1" stop-color="#20207a"/></linearGradient></defs>
<path d="M13 1.5 L23.5 6.5 L23 19 L12.5 25 L2.5 20 L3 8 Z" fill="url(#bx)" stroke="#f8f8f8" stroke-width="1"/>
<path d="M3 8 L10 12 L10 17 L2.5 20Z" fill="#7a7ac8"/>
<path d="M2.5 20 L10 15.5 L22.5 18.5 L12.5 24.5 Z" fill="url(#bxd)"/>
<path d="M10 4 L10 15.5" stroke="#c8c8f0" stroke-width="0.6"/></svg>
<svg class="a" style="left:5px;top:368px" width="22" height="24" viewBox="0 0 22 24"><defs><radialGradient id="ci" cx="0.4" cy="0.3" r="0.8"><stop offset="0" stop-color="#fff"/><stop offset="1" stop-color="#f08a98"/></radialGradient></defs>
<circle cx="11" cy="12" r="9.2" fill="url(#ci)" stroke="#222" stroke-width="1.2"/></svg>
<svg class="a" style="left:4px;top:400px" width="26" height="25" viewBox="0 0 26 25"><path d="M1.5 8 L9 1.5 L16 4.5 L15 13 L4.5 15 Z" fill="#f8eeb0" stroke="#111" stroke-width="1.2" stroke-linejoin="round"/>
<polygon points="16.50,6.20 18.79,11.34 24.39,11.94 20.21,15.71 21.38,21.21 16.50,18.40 11.62,21.21 12.79,15.71 8.61,11.94 14.21,11.34" fill="#f4e070" stroke="#111" stroke-width="1.2" stroke-linejoin="round"/></svg>
<svg class="a" style="left:4px;top:432px" width="24" height="24" viewBox="0 0 24 24"><polyline points="10.70,11.80 10.62,11.68 10.56,11.53 10.53,11.37 10.52,11.19 10.55,11.00 10.61,10.81 10.70,10.62 10.84,10.44 11.01,10.28 11.21,10.14 11.44,10.02 11.70,9.94 11.97,9.90 12.27,9.90 12.57,9.95 12.87,10.05 13.16,10.19 13.44,10.39 13.70,10.63 13.92,10.92 14.11,11.25 14.25,11.61 14.34,12.00 14.37,12.41 14.34,12.83 14.25,13.26 14.09,13.68 13.87,14.08 13.58,14.46 13.23,14.80 12.83,15.10 12.38,15.34 11.89,15.51 11.37,15.62 10.82,15.65 10.26,15.60 9.71,15.48 9.16,15.26 8.65,14.97 8.16,14.60 7.73,14.16 7.36,13.64 7.06,13.07 6.83,12.46 6.70,11.80 6.66,11.12 6.72,10.43 6.87,9.74 7.13,9.07 7.48,8.43 7.93,7.84 8.47,7.30 9.08,6.85 9.77,6.47 10.51,6.20 11.30,6.03 12.11,5.97 12.94,6.02 13.76,6.20 14.57,6.49 15.33,6.90 16.04,7.42 16.68,8.04 17.23,8.75 17.68,9.55 18.02,10.41 18.24,11.33 18.33,12.28 18.28,13.24 18.10,14.20 17.78,15.14 17.32,16.03 16.74,16.86 16.04,17.61 15.23,18.27 14.33,18.81 13.35,19.22 12.31,19.49 11.23,19.62 10.13,19.59 9.03,19.41 7.95,19.07 6.93,18.58 5.97,17.94 5.10,17.17 4.34,16.27 3.70,15.27 3.21,14.18 2.87,13.01 2.70,11.80 2.70,10.56 2.87,9.33 3.22,8.11 3.74,6.95 4.42,5.86 5.25,4.86 6.23,3.99 7.33,3.25 8.53,2.67 9.82,2.26 11.16,2.03 12.53,1.99 13.91,2.14 15.26,2.49 16.57,3.02 17.79,3.74 18.92,4.64 19.91,5.69 20.76,6.88 21.44,8.18 21.93,9.58 22.23,11.05" fill="none" stroke="#111" stroke-width="1.2"/></svg>
<svg class="a" style="left:3px;top:461px" width="26" height="27" viewBox="0 0 26 27"><defs><linearGradient id="pcy" x1="0" y1="0" x2="1" y2="0"><stop offset="0" stop-color="#fff0a0"/><stop offset="1" stop-color="#e8a010"/></linearGradient></defs>
<path d="M5.5 6 Q1.5 10 5 13 Q10 17 10 21.5 Q10.5 24.5 19 22" fill="none" stroke="#111" stroke-width="1.1"/>
<path d="M17.5 4 Q20 1.5 22.5 3 L25 5 Q25.5 7 24 9 L19.5 16 L12.5 11.5 Z" fill="url(#pcy)" stroke="#222" stroke-width="0.9"/>
<path d="M12.5 11.5 L19.5 16 L13.5 22 L12 21 Z" fill="#fafafa" stroke="#222" stroke-width="0.9"/>
<path d="M12.5 19.5 L13.5 22 L11.8 21.5Z" fill="#111"/></svg>
<svg class="a" style="left:3px;top:494px" width="26" height="27" viewBox="0 0 26 27"><defs><linearGradient id="pnb" x1="0" y1="0" x2="1" y2="1"><stop offset="0" stop-color="#c8e0f8"/><stop offset="1" stop-color="#4a80c0"/></linearGradient></defs>
<path d="M4 22.5 Q5.5 12 4 4.5 Q10 4 15 4.5" fill="none" stroke="#222" stroke-width="1"/>
<path d="M4 23.5 H13" stroke="#222" stroke-width="1"/>
<rect x="2" y="21.5" width="4.5" height="4" fill="#fff" stroke="#111" stroke-width="1"/>
<circle cx="13.5" cy="23.5" r="1.4" fill="#fff" stroke="#111" stroke-width="0.8"/>
<path d="M17 4.5 L20 1.5 Q21.5 1 23.5 2.5 L25 4 Q26 6 24.5 7.5 L21.5 11 Z" fill="url(#pnb)" stroke="#222" stroke-width="0.9"/>
<path d="M17 4.5 L21.5 11 L19.5 13 L15.5 8 Z" fill="#f0c040" stroke="#222" stroke-width="0.8"/>
<path d="M17 11 L13.5 19.5 M18 12 L14 20" stroke="#222" stroke-width="1"/></svg>
<svg class="a" style="left:3px;top:526px" width="27" height="26" viewBox="0 0 27 26"><path d="M6 1 Q2 6 2 13 Q2 22 11 22.5 Q18 23 25.5 21 Q18 21 13 20 Q5 18.5 5.5 11 Q5.5 6 6 1 Z" fill="#000"/>
<path d="M8 5 Q6 10 7 15" stroke="#555" stroke-width="0.8" fill="none"/>
<path d="M17 3.5 L21 0.8 L26 5.5 L22.5 8.5 Z" fill="#7aa8d8" stroke="#222" stroke-width="0.8"/>
<path d="M16 5 L17 3.5 L22.5 8.5 L21.5 9.5 Z" fill="#d01818" stroke="#222" stroke-width="0.6"/>
<path d="M16 5 L21.5 9.5 Q19 15 14.5 19.5 Q11 16 11.5 11 Q13 7 16 5 Z" fill="#f4d050" stroke="#222" stroke-width="0.9"/>
<path d="M17 10 L14.5 19" stroke="#222" stroke-width="0.8"/><circle cx="17.2" cy="10.5" r="0.9" fill="#222"/></svg>
<svg class="a" style="left:3px;top:558px" width="26" height="28" viewBox="0 0 26 28"><defs><linearGradient id="bkt" x1="0" y1="0" x2="1" y2="1"><stop offset="0" stop-color="#b8d8f0"/><stop offset="1" stop-color="#3a78b8"/></linearGradient><linearGradient id="pdl" x1="0" y1="0" x2="0" y2="1"><stop offset="0" stop-color="#e0ffe0"/><stop offset="1" stop-color="#40b040"/></linearGradient></defs>
<ellipse cx="12.5" cy="24" rx="10.5" ry="2.5" fill="url(#pdl)" stroke="#1a5a1a" stroke-width="0.7"/>
<path d="M6 9 Q4 16 8 23" stroke="#50c050" stroke-width="2.6" fill="none"/>
<path d="M5 8.5 L19 3.5 Q22 9 23.5 15.5 L11 20 Q8 14 5 8.5 Z" fill="url(#bkt)" stroke="#111" stroke-width="1"/>
<ellipse cx="12" cy="6" rx="7.5" ry="2.2" transform="rotate(-20 12 6)" fill="#90d090" stroke="#111" stroke-width="0.8"/>
<path d="M10 1 Q11 8 11.5 13" stroke="#222" stroke-width="0.8" fill="none"/><circle cx="11.5" cy="13" r="1.1" fill="#555"/></svg>
<svg class="a" style="left:2px;top:590px" width="30" height="28" viewBox="0 0 30 28"><defs><linearGradient id="ta" x1="0" y1="0" x2="1" y2="1"><stop offset="0" stop-color="#000"/><stop offset="0.45" stop-color="#222"/><stop offset="0.55" stop-color="#666"/><stop offset="1" stop-color="#000"/></linearGradient></defs>
<path d="M2.5 23.5 L9.5 4 L15 4 L22 23.5 L16.8 23.5 L15.3 19 L9 19 L7.5 23.5 Z M10.3 15 L14 15 L12.2 9.5 Z" fill="url(#ta)" fill-rule="evenodd" stroke="#000" stroke-width="0.8"/>
<path d="M20 3 H26.5 M23.25 3 V25.5 M20 25.5 H26.5" stroke="#000" stroke-width="3"/>
<path d="M20.5 3 H26 M23.25 3 V25.5 M20.5 25.5 H26" stroke="#fff" stroke-width="1.2"/></svg>
<svg class="a" style="left:3px;top:623px" width="27" height="26" viewBox="0 0 27 26"><path d="M9 4 H13 M14.5 4 Q19 4 19 10 V17 M6 11 Q6 14 4 18" fill="none" stroke="#111" stroke-width="1"/>
<rect x="6.5" y="1.5" width="8.5" height="7.5" fill="#b8d0ec" stroke="#111" stroke-width="1.2"/>
<rect x="9.5" y="11" width="8.5" height="4.5" fill="#f0c020" stroke="#222" stroke-width="0.8"/>
<rect x="1.5" y="17.5" width="8.5" height="7.5" fill="#b8d0ec" stroke="#111" stroke-width="1.2"/>
<rect x="16.5" y="17.5" width="8.5" height="7.5" fill="#b8d0ec" stroke="#111" stroke-width="1.2"/></svg>
<svg class="a" style="left:4px;top:656px" width="24" height="24" viewBox="0 0 24 24"><defs><linearGradient id="gr" x1="0" y1="0" x2="1" y2="1"><stop offset="0" stop-color="#ffffff"/><stop offset="1" stop-color="#3aa84a"/></linearGradient></defs>
<rect x="1" y="1" width="22" height="22" fill="url(#gr)" stroke="#e8f0e8" stroke-width="0.8"/>
<path d="M5.5 6 L17 16.5" stroke="#222" stroke-width="1.1"/>
<circle cx="5.5" cy="6" r="2.2" fill="#fff" stroke="#222" stroke-width="1"/>
<circle cx="17.5" cy="17" r="2.2" fill="#fff" stroke="#222" stroke-width="1"/></svg>
<svg class="a" style="left:6px;top:686px" width="24" height="27" viewBox="0 0 24 27"><path d="M4.5 19.5 L15.5 9" stroke="#111" stroke-width="3.6" stroke-linecap="round"/>
<path d="M4.5 19.5 L15.5 9" stroke="#a8d0f0" stroke-width="2" stroke-linecap="round"/>
<path d="M6 17.5 L14 10" stroke="#fff" stroke-width="0.7"/>
<path d="M13 8 L18 13" stroke="#111" stroke-width="3"/>
<ellipse cx="19" cy="6.5" rx="4.6" ry="3.4" transform="rotate(-45 19 6.5)" fill="#111"/>
<path d="M17.5 5 Q19 3.5 20.5 4" stroke="#888" stroke-width="0.8" fill="none"/>
<ellipse cx="3.2" cy="23.5" rx="1.3" ry="1.8" fill="#6ab0e8" stroke="#222" stroke-width="0.5"/></svg>
<div class="a" style="left:49px;top:161px;width:892px;height:17px;background:#4f4f4f;overflow:hidden"></div>
<div class="a" style="left:50px;top:172px;width:1px;height:6px;background:#e0e0e0"></div>
<div class="a" style="left:59px;top:175px;width:1px;height:3px;background:#e0e0e0"></div>
<div class="a" style="left:68px;top:172px;width:1px;height:6px;background:#e0e0e0"></div>
<div class="a" style="left:76px;top:175px;width:1px;height:3px;background:#e0e0e0"></div>
<div class="a" style="left:85px;top:172px;width:1px;height:6px;background:#e0e0e0"></div>
<div class="a" style="left:94px;top:175px;width:1px;height:3px;background:#e0e0e0"></div>
<div class="a" style="left:103px;top:164px;width:1px;height:14px;background:#e0e0e0"></div>
<div class="a" style="left:111px;top:175px;width:1px;height:3px;background:#e0e0e0"></div>
<div class="a" style="left:120px;top:172px;width:1px;height:6px;background:#e0e0e0"></div>
<div class="a" style="left:129px;top:175px;width:1px;height:3px;background:#e0e0e0"></div>
<div class="a" style="left:138px;top:172px;width:1px;height:6px;background:#e0e0e0"></div>
<div class="a" style="left:146px;top:175px;width:1px;height:3px;background:#e0e0e0"></div>
<div class="a" style="left:155px;top:172px;width:1px;height:6px;background:#e0e0e0"></div>
<div class="a" style="left:164px;top:175px;width:1px;height:3px;background:#e0e0e0"></div>
<div class="a" style="left:173px;top:172px;width:1px;height:6px;background:#e0e0e0"></div>
<div class="a" style="left:181px;top:175px;width:1px;height:3px;background:#e0e0e0"></div>
<div class="a" style="left:190px;top:164px;width:1px;height:14px;background:#e0e0e0"></div>
<div class="a" style="left:199px;top:175px;width:1px;height:3px;background:#e0e0e0"></div>
<div class="a" style="left:208px;top:172px;width:1px;height:6px;background:#e0e0e0"></div>
<div class="a" style="left:216px;top:175px;width:1px;height:3px;background:#e0e0e0"></div>
<div class="a" style="left:225px;top:172px;width:1px;height:6px;background:#e0e0e0"></div>
<div class="a" style="left:234px;top:175px;width:1px;height:3px;background:#e0e0e0"></div>
<div class="a" style="left:243px;top:172px;width:1px;height:6px;background:#e0e0e0"></div>
<div class="a" style="left:251px;top:175px;width:1px;height:3px;background:#e0e0e0"></div>
<div class="a" style="left:260px;top:172px;width:1px;height:6px;background:#e0e0e0"></div>
<div class="a" style="left:269px;top:175px;width:1px;height:3px;background:#e0e0e0"></div>
<div class="a" style="left:278px;top:164px;width:1px;height:14px;background:#e0e0e0"></div>
<div class="a" style="left:286px;top:175px;width:1px;height:3px;background:#e0e0e0"></div>
<div class="a" style="left:295px;top:172px;width:1px;height:6px;background:#e0e0e0"></div>
<div class="a" style="left:304px;top:175px;width:1px;height:3px;background:#e0e0e0"></div>
<div class="a" style="left:313px;top:172px;width:1px;height:6px;background:#e0e0e0"></div>
<div class="a" style="left:321px;top:175px;width:1px;height:3px;background:#e0e0e0"></div>
<div class="a" style="left:330px;top:172px;width:1px;height:6px;background:#e0e0e0"></div>
<div class="a" style="left:339px;top:175px;width:1px;height:3px;background:#e0e0e0"></div>
<div class="a" style="left:348px;top:172px;width:1px;height:6px;background:#e0e0e0"></div>
<div class="a" style="left:356px;top:175px;width:1px;height:3px;background:#e0e0e0"></div>
<div class="a" style="left:365px;top:164px;width:1px;height:14px;background:#e0e0e0"></div>
<div class="a" style="left:374px;top:175px;width:1px;height:3px;background:#e0e0e0"></div>
<div class="a" style="left:383px;top:172px;width:1px;height:6px;background:#e0e0e0"></div>
<div class="a" style="left:391px;top:175px;width:1px;height:3px;background:#e0e0e0"></div>
<div class="a" style="left:400px;top:172px;width:1px;height:6px;background:#e0e0e0"></div>
<div class="a" style="left:409px;top:175px;width:1px;height:3px;background:#e0e0e0"></div>
<div class="a" style="left:418px;top:172px;width:1px;height:6px;background:#e0e0e0"></div>
<div class="a" style="left:426px;top:175px;width:1px;height:3px;background:#e0e0e0"></div>
<div class="a" style="left:435px;top:172px;width:1px;height:6px;background:#e0e0e0"></div>
<div class="a" style="left:444px;top:175px;width:1px;height:3px;background:#e0e0e0"></div>
<div class="a" style="left:453px;top:164px;width:1px;height:14px;background:#e0e0e0"></div>
<div class="a" style="left:461px;top:175px;width:1px;height:3px;background:#e0e0e0"></div>
<div class="a" style="left:470px;top:172px;width:1px;height:6px;background:#e0e0e0"></div>
<div class="a" style="left:479px;top:175px;width:1px;height:3px;background:#e0e0e0"></div>
<div class="a" style="left:488px;top:172px;width:1px;height:6px;background:#e0e0e0"></div>
<div class="a" style="left:496px;top:175px;width:1px;height:3px;background:#e0e0e0"></div>
<div class="a" style="left:505px;top:172px;width:1px;height:6px;background:#e0e0e0"></div>
<div class="a" style="left:514px;top:175px;width:1px;height:3px;background:#e0e0e0"></div>
<div class="a" style="left:523px;top:172px;width:1px;height:6px;background:#e0e0e0"></div>
<div class="a" style="left:531px;top:175px;width:1px;height:3px;background:#e0e0e0"></div>
<div class="a" style="left:540px;top:164px;width:1px;height:14px;background:#e0e0e0"></div>
<div class="a" style="left:549px;top:175px;width:1px;height:3px;background:#e0e0e0"></div>
<div class="a" style="left:558px;top:172px;width:1px;height:6px;background:#e0e0e0"></div>
<div class="a" style="left:566px;top:175px;width:1px;height:3px;background:#e0e0e0"></div>
<div class="a" style="left:575px;top:172px;width:1px;height:6px;background:#e0e0e0"></div>
<div class="a" style="left:584px;top:175px;width:1px;height:3px;background:#e0e0e0"></div>
<div class="a" style="left:593px;top:172px;width:1px;height:6px;background:#e0e0e0"></div>
<div class="a" style="left:601px;top:175px;width:1px;height:3px;background:#e0e0e0"></div>
<div class="a" style="left:610px;top:172px;width:1px;height:6px;background:#e0e0e0"></div>
<div class="a" style="left:619px;top:175px;width:1px;height:3px;background:#e0e0e0"></div>
<div class="a" style="left:628px;top:164px;width:1px;height:14px;background:#e0e0e0"></div>
<div class="a" style="left:636px;top:175px;width:1px;height:3px;background:#e0e0e0"></div>
<div class="a" style="left:645px;top:172px;width:1px;height:6px;background:#e0e0e0"></div>
<div class="a" style="left:654px;top:175px;width:1px;height:3px;background:#e0e0e0"></div>
<div class="a" style="left:663px;top:172px;width:1px;height:6px;background:#e0e0e0"></div>
<div class="a" style="left:671px;top:175px;width:1px;height:3px;background:#e0e0e0"></div>
<div class="a" style="left:680px;top:172px;width:1px;height:6px;background:#e0e0e0"></div>
<div class="a" style="left:689px;top:175px;width:1px;height:3px;background:#e0e0e0"></div>
<div class="a" style="left:698px;top:172px;width:1px;height:6px;background:#e0e0e0"></div>
<div class="a" style="left:706px;top:175px;width:1px;height:3px;background:#e0e0e0"></div>
<div class="a" style="left:715px;top:164px;width:1px;height:14px;background:#e0e0e0"></div>
<div class="a" style="left:724px;top:175px;width:1px;height:3px;background:#e0e0e0"></div>
<div class="a" style="left:733px;top:172px;width:1px;height:6px;background:#e0e0e0"></div>
<div class="a" style="left:741px;top:175px;width:1px;height:3px;background:#e0e0e0"></div>
<div class="a" style="left:750px;top:172px;width:1px;height:6px;background:#e0e0e0"></div>
<div class="a" style="left:759px;top:175px;width:1px;height:3px;background:#e0e0e0"></div>
<div class="a" style="left:768px;top:172px;width:1px;height:6px;background:#e0e0e0"></div>
<div class="a" style="left:776px;top:175px;width:1px;height:3px;background:#e0e0e0"></div>
<div class="a" style="left:785px;top:172px;width:1px;height:6px;background:#e0e0e0"></div>
<div class="a" style="left:794px;top:175px;width:1px;height:3px;background:#e0e0e0"></div>
<div class="a" style="left:803px;top:164px;width:1px;height:14px;background:#e0e0e0"></div>
<div class="a" style="left:811px;top:175px;width:1px;height:3px;background:#e0e0e0"></div>
<div class="a" style="left:820px;top:172px;width:1px;height:6px;background:#e0e0e0"></div>
<div class="a" style="left:829px;top:175px;width:1px;height:3px;background:#e0e0e0"></div>
<div class="a" style="left:838px;top:172px;width:1px;height:6px;background:#e0e0e0"></div>
<div class="a" style="left:846px;top:175px;width:1px;height:3px;background:#e0e0e0"></div>
<div class="a" style="left:855px;top:172px;width:1px;height:6px;background:#e0e0e0"></div>
<div class="a" style="left:864px;top:175px;width:1px;height:3px;background:#e0e0e0"></div>
<div class="a" style="left:873px;top:172px;width:1px;height:6px;background:#e0e0e0"></div>
<div class="a" style="left:881px;top:175px;width:1px;height:3px;background:#e0e0e0"></div>
<div class="a" style="left:890px;top:164px;width:1px;height:14px;background:#e0e0e0"></div>
<div class="a" style="left:899px;top:175px;width:1px;height:3px;background:#e0e0e0"></div>
<div class="a" style="left:908px;top:172px;width:1px;height:6px;background:#e0e0e0"></div>
<div class="a" style="left:916px;top:175px;width:1px;height:3px;background:#e0e0e0"></div>
<div class="a" style="left:925px;top:172px;width:1px;height:6px;background:#e0e0e0"></div>
<div class="a" style="left:934px;top:175px;width:1px;height:3px;background:#e0e0e0"></div>
<div class="t" style="left:106.00px;top:165.70px;font-size:8.5px;color:#dcdcdc;letter-spacing:0.667px;font-family:'Liberation Sans',sans-serif;font-style:italic;">-750</div>
<div class="t" style="left:193.00px;top:165.70px;font-size:8.5px;color:#dcdcdc;letter-spacing:0.667px;font-family:'Liberation Sans',sans-serif;font-style:italic;">-500</div>
<div class="t" style="left:281.00px;top:165.70px;font-size:8.5px;color:#dcdcdc;letter-spacing:0.667px;font-family:'Liberation Sans',sans-serif;font-style:italic;">-250</div>
<div class="t" style="left:368.00px;top:165.70px;font-size:8.5px;color:#dcdcdc;letter-spacing:0.000px;font-family:'Liberation Sans',sans-serif;font-style:italic;">0</div>
<div class="t" style="left:456.05px;top:165.70px;font-size:8.5px;color:#dcdcdc;letter-spacing:-0.125px;font-family:'Liberation Sans',sans-serif;font-style:italic;">250</div>
<div class="t" style="left:543.00px;top:165.70px;font-size:8.5px;color:#dcdcdc;letter-spacing:-0.100px;font-family:'Liberation Sans',sans-serif;font-style:italic;">500</div>
<div class="t" style="left:631.00px;top:165.70px;font-size:8.5px;color:#dcdcdc;letter-spacing:-0.100px;font-family:'Liberation Sans',sans-serif;font-style:italic;">750</div>
<div class="t" style="left:718.00px;top:165.70px;font-size:8.5px;color:#dcdcdc;letter-spacing:-0.633px;font-family:'Liberation Sans',sans-serif;font-style:italic;">1000</div>
<div class="t" style="left:806.00px;top:165.70px;font-size:8.5px;color:#dcdcdc;letter-spacing:-0.633px;font-family:'Liberation Sans',sans-serif;font-style:italic;">1250</div>
<div class="t" style="left:893.00px;top:165.70px;font-size:8.5px;color:#dcdcdc;letter-spacing:-0.633px;font-family:'Liberation Sans',sans-serif;font-style:italic;">1500</div>
<div class="a" style="left:43px;top:185px;width:6px;height:1px;background:#e0e0e0"></div>
<div class="a" style="left:46px;top:194px;width:3px;height:1px;background:#e0e0e0"></div>
<div class="a" style="left:43px;top:203px;width:6px;height:1px;background:#e0e0e0"></div>
<div class="a" style="left:46px;top:211px;width:3px;height:1px;background:#e0e0e0"></div>
<div class="a" style="left:43px;top:220px;width:6px;height:1px;background:#e0e0e0"></div>
<div class="a" style="left:46px;top:229px;width:3px;height:1px;background:#e0e0e0"></div>
<div class="a" style="left:35px;top:238px;width:14px;height:1px;background:#e0e0e0"></div>
<div class="a" style="left:46px;top:246px;width:3px;height:1px;background:#e0e0e0"></div>
<div class="a" style="left:43px;top:255px;width:6px;height:1px;background:#e0e0e0"></div>
<div class="a" style="left:46px;top:264px;width:3px;height:1px;background:#e0e0e0"></div>
<div class="a" style="left:43px;top:273px;width:6px;height:1px;background:#e0e0e0"></div>
<div class="a" style="left:46px;top:281px;width:3px;height:1px;background:#e0e0e0"></div>
<div class="a" style="left:43px;top:290px;width:6px;height:1px;background:#e0e0e0"></div>
<div class="a" style="left:46px;top:299px;width:3px;height:1px;background:#e0e0e0"></div>
<div class="a" style="left:43px;top:308px;width:6px;height:1px;background:#e0e0e0"></div>
<div class="a" style="left:46px;top:316px;width:3px;height:1px;background:#e0e0e0"></div>
<div class="a" style="left:35px;top:325px;width:14px;height:1px;background:#e0e0e0"></div>
<div class="a" style="left:46px;top:334px;width:3px;height:1px;background:#e0e0e0"></div>
<div class="a" style="left:43px;top:343px;width:6px;height:1px;background:#e0e0e0"></div>
<div class="a" style="left:46px;top:351px;width:3px;height:1px;background:#e0e0e0"></div>
<div class="a" style="left:43px;top:360px;width:6px;height:1px;background:#e0e0e0"></div>
<div class="a" style="left:46px;top:369px;width:3px;height:1px;background:#e0e0e0"></div>
<div class="a" style="left:43px;top:378px;width:6px;height:1px;background:#e0e0e0"></div>
<div class="a" style="left:46px;top:386px;width:3px;height:1px;background:#e0e0e0"></div>
<div class="a" style="left:43px;top:395px;width:6px;height:1px;background:#e0e0e0"></div>
<div class="a" style="left:46px;top:404px;width:3px;height:1px;background:#e0e0e0"></div>
<div class="a" style="left:35px;top:413px;width:14px;height:1px;background:#e0e0e0"></div>
<div class="a" style="left:46px;top:421px;width:3px;height:1px;background:#e0e0e0"></div>
<div class="a" style="left:43px;top:430px;width:6px;height:1px;background:#e0e0e0"></div>
<div class="a" style="left:46px;top:439px;width:3px;height:1px;background:#e0e0e0"></div>
<div class="a" style="left:43px;top:448px;width:6px;height:1px;background:#e0e0e0"></div>
<div class="a" style="left:46px;top:456px;width:3px;height:1px;background:#e0e0e0"></div>
<div class="a" style="left:43px;top:465px;width:6px;height:1px;background:#e0e0e0"></div>
<div class="a" style="left:46px;top:474px;width:3px;height:1px;background:#e0e0e0"></div>
<div class="a" style="left:43px;top:483px;width:6px;height:1px;background:#e0e0e0"></div>
<div class="a" style="left:46px;top:491px;width:3px;height:1px;background:#e0e0e0"></div>
<div class="a" style="left:35px;top:500px;width:14px;height:1px;background:#e0e0e0"></div>
<div class="a" style="left:46px;top:509px;width:3px;height:1px;background:#e0e0e0"></div>
<div class="a" style="left:43px;top:518px;width:6px;height:1px;background:#e0e0e0"></div>
<div class="a" style="left:46px;top:526px;width:3px;height:1px;background:#e0e0e0"></div>
<div class="a" style="left:43px;top:535px;width:6px;height:1px;background:#e0e0e0"></div>
<div class="a" style="left:46px;top:544px;width:3px;height:1px;background:#e0e0e0"></div>
<div class="a" style="left:43px;top:553px;width:6px;height:1px;background:#e0e0e0"></div>
<div class="a" style="left:46px;top:561px;width:3px;height:1px;background:#e0e0e0"></div>
<div class="a" style="left:43px;top:570px;width:6px;height:1px;background:#e0e0e0"></div>
<div class="a" style="left:46px;top:579px;width:3px;height:1px;background:#e0e0e0"></div>
<div class="a" style="left:35px;top:588px;width:14px;height:1px;background:#e0e0e0"></div>
<div class="a" style="left:46px;top:596px;width:3px;height:1px;background:#e0e0e0"></div>
<div class="a" style="left:43px;top:605px;width:6px;height:1px;background:#e0e0e0"></div>
<div class="a" style="left:46px;top:614px;width:3px;height:1px;background:#e0e0e0"></div>
<div class="a" style="left:43px;top:623px;width:6px;height:1px;background:#e0e0e0"></div>
<div class="a" style="left:46px;top:631px;width:3px;height:1px;background:#e0e0e0"></div>
<div class="a" style="left:43px;top:640px;width:6px;height:1px;background:#e0e0e0"></div>
<div class="a" style="left:46px;top:649px;width:3px;height:1px;background:#e0e0e0"></div>
<div class="a" style="left:43px;top:658px;width:6px;height:1px;background:#e0e0e0"></div>
<div class="a" style="left:46px;top:666px;width:3px;height:1px;background:#e0e0e0"></div>
<div class="a" style="left:35px;top:675px;width:14px;height:1px;background:#e0e0e0"></div>
<div class="a" style="left:46px;top:684px;width:3px;height:1px;background:#e0e0e0"></div>
<div class="t" style="left:36.00px;top:242.66px;font-size:7.2px;color:#dcdcdc;letter-spacing:0.000px;font-family:'Liberation Sans',sans-serif;font-style:italic;">1</div>
<div class="t" style="left:36.05px;top:250.99px;font-size:7.2px;color:#dcdcdc;letter-spacing:0.000px;font-family:'Liberation Sans',sans-serif;font-style:italic;">2</div>
<div class="t" style="left:36.00px;top:259.32px;font-size:7.2px;color:#dcdcdc;letter-spacing:0.000px;font-family:'Liberation Sans',sans-serif;font-style:italic;">5</div>
<div class="t" style="left:36.00px;top:267.65px;font-size:7.2px;color:#dcdcdc;letter-spacing:0.000px;font-family:'Liberation Sans',sans-serif;font-style:italic;">0</div>
<div class="t" style="left:36.00px;top:329.66px;font-size:7.2px;color:#dcdcdc;letter-spacing:0.000px;font-family:'Liberation Sans',sans-serif;font-style:italic;">1</div>
<div class="t" style="left:36.00px;top:337.99px;font-size:7.2px;color:#dcdcdc;letter-spacing:0.000px;font-family:'Liberation Sans',sans-serif;font-style:italic;">0</div>
<div class="t" style="left:36.00px;top:346.32px;font-size:7.2px;color:#dcdcdc;letter-spacing:0.000px;font-family:'Liberation Sans',sans-serif;font-style:italic;">0</div>
<div class="t" style="left:36.00px;top:354.65px;font-size:7.2px;color:#dcdcdc;letter-spacing:0.000px;font-family:'Liberation Sans',sans-serif;font-style:italic;">0</div>
<div class="t" style="left:36.00px;top:417.66px;font-size:7.2px;color:#dcdcdc;letter-spacing:0.000px;font-family:'Liberation Sans',sans-serif;font-style:italic;">7</div>
<div class="t" style="left:36.00px;top:425.99px;font-size:7.2px;color:#dcdcdc;letter-spacing:0.000px;font-family:'Liberation Sans',sans-serif;font-style:italic;">5</div>
<div class="t" style="left:36.00px;top:434.32px;font-size:7.2px;color:#dcdcdc;letter-spacing:0.000px;font-family:'Liberation Sans',sans-serif;font-style:italic;">0</div>
<div class="t" style="left:36.00px;top:504.66px;font-size:7.2px;color:#dcdcdc;letter-spacing:0.000px;font-family:'Liberation Sans',sans-serif;font-style:italic;">5</div>
<div class="t" style="left:36.00px;top:512.99px;font-size:7.2px;color:#dcdcdc;letter-spacing:0.000px;font-family:'Liberation Sans',sans-serif;font-style:italic;">0</div>
<div class="t" style="left:36.00px;top:521.32px;font-size:7.2px;color:#dcdcdc;letter-spacing:0.000px;font-family:'Liberation Sans',sans-serif;font-style:italic;">0</div>
<div class="t" style="left:36.05px;top:592.66px;font-size:7.2px;color:#dcdcdc;letter-spacing:0.000px;font-family:'Liberation Sans',sans-serif;font-style:italic;">2</div>
<div class="t" style="left:36.00px;top:600.99px;font-size:7.2px;color:#dcdcdc;letter-spacing:0.000px;font-family:'Liberation Sans',sans-serif;font-style:italic;">5</div>
<div class="t" style="left:36.00px;top:609.32px;font-size:7.2px;color:#dcdcdc;letter-spacing:0.000px;font-family:'Liberation Sans',sans-serif;font-style:italic;">0</div>
<div class="t" style="left:36.00px;top:679.66px;font-size:7.2px;color:#dcdcdc;letter-spacing:0.000px;font-family:'Liberation Sans',sans-serif;font-style:italic;">0</div>
<svg class="a" style="left:43px;top:286px" width="6" height="9" viewBox="0 0 6 9"><path d="M0 0 L6 4.5 L0 9z" fill="#e8e8e8"/></svg>
<svg class="a" style="left:522px;top:172px" width="9" height="6" viewBox="0 0 9 6"><path d="M0 0 L9 0 L4.5 6z" fill="#e8e8e8"/></svg>
<div class="a" style="left:49px;top:178px;width:892px;height:514px;background:#fff"></div>
<div class="a" style="left:365px;top:307px;width:261px;height:369px;border:1px solid #606060;box-shadow:2px 2px 0 #5c5c5c"></div>
<svg class="a" style="left:49px;top:178px" width="892" height="514" viewBox="49 178 892 514"><circle cx="497.9" cy="482.2" r="130.6" fill="none" stroke="#000" stroke-width="5"/>
<circle cx="498.7" cy="482.2" r="83.5" fill="none" stroke="#000" stroke-width="4.8"/>
<rect x="-83.80" y="-15.80" width="167.60" height="31.60" fill="#fff" stroke="#000" stroke-width="3.5" transform="translate(419.80 535.60) rotate(-39.80)" stroke-linejoin="miter"/>
<rect x="-83.80" y="-15.80" width="167.60" height="31.60" fill="#fff" stroke="#000" stroke-width="3.5" transform="translate(572.40 537.70) rotate(41.00)" stroke-linejoin="miter"/>
<rect x="480.5" y="298.1" width="34.2" height="168.9" fill="#fff" stroke="#000" stroke-width="3.2"/>
<rect x="478.5" y="296.5" width="38" height="173.5" fill="none" stroke="#888" stroke-width="1" stroke-dasharray="4 3" opacity="0.8"/>
<path d="M-6.5 0 L-2.3 -4.6 L-2.3 -2.1 L2.3 -2.1 L2.3 -4.6 L6.5 0 L2.3 4.6 L2.3 2.1 L-2.3 2.1 L-2.3 4.6 Z" fill="#000" stroke="#000" stroke-width="0.5" transform="translate(497.5 287.4) rotate(0)"/><path d="M-6.5 0 L-2.3 -4.6 L-2.3 -2.1 L2.3 -2.1 L2.3 -4.6 L6.5 0 L2.3 4.6 L2.3 2.1 L-2.3 2.1 L-2.3 4.6 Z" fill="#000" stroke="#000" stroke-width="0.5" transform="translate(470.4 383.3) rotate(90)"/><path d="M-6.5 0 L-2.3 -4.6 L-2.3 -2.1 L2.3 -2.1 L2.3 -4.6 L6.5 0 L2.3 4.6 L2.3 2.1 L-2.3 2.1 L-2.3 4.6 Z" fill="#000" stroke="#000" stroke-width="0.5" transform="translate(524.4 383.3) rotate(90)"/><path d="M-6.5 0 L-2.3 -4.6 L-2.3 -2.1 L2.3 -2.1 L2.3 -4.6 L6.5 0 L2.3 4.6 L2.3 2.1 L-2.3 2.1 L-2.3 4.6 Z" fill="#000" stroke="#000" stroke-width="0.5" transform="translate(497.5 478.3) rotate(0)"/><path d="M-7 0 L-3 -4.5 L-3 -2 L0 -2 L1 -3 L3 -2 L3 -4.5 L7 0 L3 4.5 L3 2 L0.5 2 L-0.5 1 L-3 2 L-3 4.5 Z" fill="#000" stroke="#000" stroke-width="0.9" transform="translate(472.4 289.4) rotate(-45)"/><path d="M-7 0 L-3 -4.5 L-3 -2 L0 -2 L1 -3 L3 -2 L3 -4.5 L7 0 L3 4.5 L3 2 L0.5 2 L-0.5 1 L-3 2 L-3 4.5 Z" fill="#10e070" stroke="#000" stroke-width="0.9" transform="translate(522.5 289.4) rotate(45)"/><path d="M-7 0 L-3 -4.5 L-3 -2 L0 -2 L1 -3 L3 -2 L3 -4.5 L7 0 L3 4.5 L3 2 L0.5 2 L-0.5 1 L-3 2 L-3 4.5 Z" fill="#000" stroke="#fff" stroke-width="0.8" transform="translate(473.6 477.3) rotate(45)"/><path d="M-7 0 L-3 -4.5 L-3 -2 L0 -2 L1 -3 L3 -2 L3 -4.5 L7 0 L3 4.5 L3 2 L0.5 2 L-0.5 1 L-3 2 L-3 4.5 Z" fill="#000" stroke="#fff" stroke-width="0.8" transform="translate(521 477.3) rotate(-45)"/><path d="M492.4 383.3 H502.4 M497.4 378.3 V388.3" stroke="#000" stroke-width="1"/><path d="M531.5 290.5 L531.5 305 L535.5 302 L539 310 L542 308.5 L539 301 L544 301 Z" fill="#d8d8d4" stroke="#444" stroke-width="1" stroke-linejoin="round"/></svg>
<div class="a" style="left:945px;top:187px;width:15px;height:505px;background:#323232;border:1px solid #2a2a2a;border-radius:3px"></div>
<div class="a" style="left:945px;top:187px;width:15px;height:14px;background:#555;border:1px solid #3a3a3a;border-radius:3px 3px 0 0"></div>
<svg class="a" style="left:947px;top:189px" width="11" height="9" viewBox="0 0 11 9"><path d="M2 6 L5.5 2.5 L9 6" fill="none" stroke="#999" stroke-width="1.4"/></svg>
<div class="a" style="left:945px;top:678px;width:15px;height:14px;background:#555;border:1px solid #3a3a3a;border-radius:0 0 3px 3px"></div>
<svg class="a" style="left:947px;top:681px" width="11" height="9" viewBox="0 0 11 9"><path d="M2 3 L5.5 6.5 L9 3" fill="none" stroke="#999" stroke-width="1.4"/></svg>
<div class="a" style="left:945px;top:318px;width:15px;height:197px;background:linear-gradient(90deg,#0a3050 0,#60c8ff 1px,#30b0fa 3px,#0a98f0 14px,#0a3050 15px);"></div>
<svg class="a" style="left:950px;top:412px" width="6" height="9" viewBox="0 0 6 9"><path d="M0 1.5H5M0 4.5H5M0 7.5H5" stroke="#0a2a48" stroke-width="1"/></svg>
<svg class="a" style="left:966px;top:435px" width="5" height="9" viewBox="0 0 5 9"><path d="M0 1.5H4M0 4.5H4M0 7.5H4" stroke="#3a3a3a" stroke-width="1"/></svg>
<div class="a" style="left:49px;top:696px;width:892px;height:15px;background:#323232;border:1px solid #2a2a2a;border-radius:3px"></div>
<div class="a" style="left:49px;top:696px;width:15px;height:15px;background:#555;border:1px solid #3a3a3a;border-radius:3px 0 0 3px"></div>
<svg class="a" style="left:51px;top:698px" width="11" height="11" viewBox="0 0 11 11"><path d="M6.5 2 L3 5.5 L6.5 9" fill="none" stroke="#999" stroke-width="1.4"/></svg>
<div class="a" style="left:926px;top:696px;width:15px;height:15px;background:#555;border:1px solid #3a3a3a;border-radius:0 3px 3px 0"></div>
<svg class="a" style="left:928px;top:698px" width="11" height="11" viewBox="0 0 11 11"><path d="M4 2 L7.5 5.5 L4 9" fill="none" stroke="#999" stroke-width="1.4"/></svg>
<div class="a" style="left:142px;top:696px;width:775px;height:15px;background:linear-gradient(#0a3050 0,#70c8ff 1px,#22a8f8 3px,#0a98f0 14px,#0a3050 15px)"></div>
<svg class="a" style="left:525px;top:700px" width="10" height="7" viewBox="0 0 10 7"><path d="M1.5 0V7M4.5 0V7M7.5 0V7" stroke="#0a2a48" stroke-width="1"/></svg>
<div class="a" style="left:947px;top:696px;width:15px;height:16px;clip-path:polygon(5% 3%,98% 60%,18% 100%);background:radial-gradient(circle at 40% 60%,rgba(255,255,255,0.7) 0,rgba(255,255,255,0) 45%),conic-gradient(from 0deg at 40% 60%,#20c020,#e0e020 60deg,#f02020 120deg,#e020e0 180deg,#2020f0 240deg,#20c0e0 300deg,#20c020 360deg)"></div>
<svg class="a" style="left:944px;top:165px" width="18" height="18" viewBox="0 0 18 18"><path d="M10 10 L16 16" stroke="#f0a010" stroke-width="3" stroke-linecap="round"/><circle cx="7" cy="7" r="5.3" fill="#c8dcf0" stroke="#333" stroke-width="1.2"/></svg>
<div class="a" style="left:961px;top:161px;width:48px;height:554px;background:#4d4d4d"></div>
<div class="a" style="left:971px;top:162px;width:36px;height:553px;background:#4f4f4f;border:1px solid #3a3a3a"></div>
<div class="a" style="left:994px;top:383.5px;width:0;height:0;transform:rotate(-90deg);transform-origin:0 0"><div class="t" style="left:0.00px;top:-11.85px;font-size:14px;color:#b8b8b8;letter-spacing:1.245px;font-family:'Liberation Sans',sans-serif;">Fill and Stroke (Shift+Ctrl+F)</div></div>
<svg class="a" style="left:982px;top:384px" width="16" height="16" viewBox="0 0 16 16"><defs><linearGradient id="dfs" x1="0" y1="1" x2="1" y2="0"><stop offset="0.3" stop-color="#000"/><stop offset="0.55" stop-color="#fff"/></linearGradient></defs><rect x="1" y="1" width="13" height="13" fill="url(#dfs)" stroke="#222" stroke-width="0.6"/><path d="M14 2 L5 11 L2 14 L4 10 L12 2Z" fill="#555"/><path d="M15 1 L12 2.5 L13.5 4 Z" fill="#f0c020"/></svg>
<div class="a" style="left:1012px;top:121px;width:12px;height:1px;background:#3a3a3a"></div>
<div class="a" style="left:1012px;top:155px;width:12px;height:2px;background:#111"></div>
<div class="a" style="left:1012px;top:157px;width:12px;height:584px;background:#484848"></div>
<div class="a" style="left:1022px;top:157px;width:2px;height:551px;background:#9a9a9a"></div>
<div class="a" style="left:1012px;top:157px;width:10px;height:493px;background:#323232;border-radius:2px"></div>
<div class="a" style="left:1012px;top:157px;width:10px;height:13px;background:#555;border:1px solid #3a3a3a"></div>
<svg class="a" style="left:1012px;top:159px" width="10" height="9" viewBox="0 0 10 9"><path d="M1.5 6 L5 2.5 L8.5 6" fill="none" stroke="#999" stroke-width="1.3"/></svg>
<div class="a" style="left:1012px;top:383px;width:10px;height:104px;background:linear-gradient(90deg,#0a3050,#22a8f8 2px,#0a98f0)"></div>
<svg class="a" style="left:1013px;top:430px" width="8" height="8" viewBox="0 0 8 8"><path d="M0 1.5H7M0 4H7M0 6.5H7" stroke="#0a2a48" stroke-width="1"/></svg>
<div class="a" style="left:1012px;top:634px;width:10px;height:14px;background:#555;border:1px solid #3a3a3a"></div>
<svg class="a" style="left:1012px;top:637px" width="10" height="8" viewBox="0 0 10 8"><path d="M1.5 2 L5 5.5 L8.5 2" fill="none" stroke="#999" stroke-width="1.3"/></svg>
<div class="a" style="left:1012px;top:650px;width:10px;height:12px;background:#4e4e4e;border:1px solid #3a3a3a;border-radius:2px"></div>
<div class="a" style="left:1012px;top:665px;width:10px;height:12px;background:#4e4e4e;border:1px solid #3a3a3a;border-radius:2px"></div>
<div class="a" style="left:1012px;top:680px;width:10px;height:12px;background:#4e4e4e;border:1px solid #3a3a3a;border-radius:2px"></div>
<svg class="a" style="left:1012px;top:650px" width="10" height="12" viewBox="0 0 10 12"><path d="M2 5 L5 2 L8 5Z M2 7 L5 10 L8 7Z" fill="#111"/></svg>
<svg class="a" style="left:1012px;top:665px" width="10" height="12" viewBox="0 0 10 12"><path d="M2 9 Q2 3 6 3 Q9 3 9 9Z" fill="#5aa0e0"/></svg>
<svg class="a" style="left:1012px;top:680px" width="10" height="12" viewBox="0 0 10 12"><path d="M2 3 H8 M2 5 L5 9 L8 5Z" fill="#111" stroke="#111"/></svg>
<div class="a" style="left:1012px;top:711px;width:10px;height:25px;border:1px solid #888;border-left:none;background:#444"></div>
<div class="a" style="left:1011px;top:36px;width:1px;height:705px;background:#1a1a1a"></div>
<div class="a" style="left:1008px;top:90px;width:3px;height:651px;background:#3a3a3a"></div>
<div class="a" style="left:0px;top:711px;width:1009px;height:30px;background:#4d4d4d"></div>
<div class="a" style="left:0px;top:716px;width:985px;height:24px;background:#333"></div>
<div class="a" style="left:985px;top:716px;width:22px;height:24px;background:#555"></div>
<div class="a" style="left:1.0px;top:717px;width:26.0px;height:22px;background:#000000"></div>
<div class="a" style="left:27.0px;top:717px;width:26.0px;height:22px;background:#1a1a1a"></div>
<div class="a" style="left:53.0px;top:717px;width:26.0px;height:22px;background:#333333"></div>
<div class="a" style="left:79.0px;top:717px;width:26.0px;height:22px;background:#4d4d4d"></div>
<div class="a" style="left:105.0px;top:717px;width:26.0px;height:22px;background:#666666"></div>
<div class="a" style="left:131.0px;top:717px;width:26.0px;height:22px;background:#808080"></div>
<div class="a" style="left:157.0px;top:717px;width:26.0px;height:22px;background:#999999"></div>
<div class="a" style="left:183.0px;top:717px;width:26.0px;height:22px;background:#b3b3b3"></div>
<div class="a" style="left:209.0px;top:717px;width:26.0px;height:22px;background:#cccccc"></div>
<div class="a" style="left:235.0px;top:717px;width:26.0px;height:22px;background:#e6e6e6"></div>
<div class="a" style="left:261.0px;top:717px;width:26.0px;height:22px;background:#ececec"></div>
<div class="a" style="left:287.0px;top:717px;width:26.0px;height:22px;background:#f2f2f2"></div>
<div class="a" style="left:313.0px;top:717px;width:26.0px;height:22px;background:#f8f8f8"></div>
<div class="a" style="left:339.0px;top:717px;width:26.0px;height:22px;background:#ffffff"></div>
<div class="a" style="left:365.0px;top:717px;width:26.0px;height:22px;background:#800000"></div>
<div class="a" style="left:391.0px;top:717px;width:26.0px;height:22px;background:#ff0000"></div>
<div class="a" style="left:417.0px;top:717px;width:26.0px;height:22px;background:#808000"></div>
<div class="a" style="left:443.0px;top:717px;width:26.0px;height:22px;background:#ffff00"></div>
<div class="a" style="left:469.0px;top:717px;width:26.0px;height:22px;background:#008000"></div>
<div class="a" style="left:495.0px;top:717px;width:26.0px;height:22px;background:#00ff00"></div>
<div class="a" style="left:521.0px;top:717px;width:26.0px;height:22px;background:#008080"></div>
<div class="a" style="left:547.0px;top:717px;width:26.0px;height:22px;background:#00ffff"></div>
<div class="a" style="left:573.0px;top:717px;width:26.0px;height:22px;background:#000080"></div>
<div class="a" style="left:599.0px;top:717px;width:26.0px;height:22px;background:#0000ff"></div>
<div class="a" style="left:625.0px;top:717px;width:26.0px;height:22px;background:#800080"></div>
<div class="a" style="left:651.0px;top:717px;width:26.0px;height:22px;background:#ff00ff"></div>
<div class="a" style="left:677.0px;top:717px;width:26.0px;height:22px;background:#2b0000"></div>
<div class="a" style="left:703.0px;top:717px;width:26.0px;height:22px;background:#550000"></div>
<div class="a" style="left:729.0px;top:717px;width:26.0px;height:22px;background:#800000"></div>
<div class="a" style="left:755.0px;top:717px;width:26.0px;height:22px;background:#aa0000"></div>
<div class="a" style="left:781.0px;top:717px;width:26.0px;height:22px;background:#d40000"></div>
<div class="a" style="left:807.0px;top:717px;width:26.0px;height:22px;background:#ff0000"></div>
<div class="a" style="left:833.0px;top:717px;width:26.0px;height:22px;background:#ff2a2a"></div>
<div class="a" style="left:859.0px;top:717px;width:26.0px;height:22px;background:#ff5555"></div>
<div class="a" style="left:885.0px;top:717px;width:26.0px;height:22px;background:#ff8080"></div>
<div class="a" style="left:911.0px;top:717px;width:26.0px;height:22px;background:#ffaaaa"></div>
<div class="a" style="left:937.0px;top:717px;width:26.0px;height:22px;background:#ffd5d5"></div>
<div class="a" style="left:963.0px;top:717px;width:22.0px;height:22px;background:#2b1111"></div>
<svg class="a" style="left:989px;top:719px" width="14" height="16" viewBox="0 0 14 16"><path d="M10 1.5 L3 8 L10 14.5" fill="none" stroke="#aaa" stroke-width="1.6"/></svg>
<div class="a" style="left:0px;top:741px;width:1024px;height:27px;background:linear-gradient(#1c1c1c 0,#262626 2px,#0c0c0c 9px,#000 13px,#111 20px,#2a2a2a 27px)"></div>
<div class="a" style="left:2px;top:742px;width:26px;height:25px;background:#3a3a3a;border:1px solid #4a4a4a;border-radius:3px"></div>
<svg class="a" style="left:5px;top:746px" width="20" height="16" viewBox="0 0 20 16"><defs><linearGradient id="sd" x1="0" y1="0" x2="0" y2="1"><stop offset="0" stop-color="#2a5aa8"/><stop offset="1" stop-color="#a8c8f0"/></linearGradient></defs><rect x="1" y="1" width="18" height="14" rx="1.5" fill="url(#sd)" stroke="#ddd" stroke-width="1"/><path d="M2 6 Q10 14 18 6 V14 H2Z" fill="#fff" opacity="0.8"/></svg>
<div class="a" style="left:30px;top:742px;width:10px;height:25px;background:#0a0a0a"></div>
<svg class="a" style="left:31px;top:749px" width="8" height="10" viewBox="0 0 8 10"><path d="M1 2H7M1 5H7M1 8H7" stroke="#444" stroke-width="1"/></svg>
<div class="a" style="left:42px;top:742px;width:222px;height:25px;background:#4a4a4a;border:1px solid #555;border-top-color:#5a5a5a;border-radius:3px"></div><svg class="a" style="left:49px;top:746px" width="14" height="18" viewBox="0 0 14 18"><path d="M1 1 H9 L13 5 V17 H1Z" fill="#f4f4f4" stroke="#666" stroke-width="0.8"/><path d="M3 6H9M3 8.5H11M3 11H6" stroke="#888" stroke-width="0.8"/><rect x="6" y="10" width="5" height="5" fill="#3a78c8"/></svg><div class="t" style="left:72.50px;top:747.57px;font-size:13.5px;color:#c4c4c4;letter-spacing:1.048px;font-family:'Liberation Sans',sans-serif;">Untitled 1 – OpenOffice.…</div>
<div class="a" style="left:266px;top:742px;width:225px;height:25px;background:#4a4a4a;border:1px solid #555;border-top-color:#5a5a5a;border-radius:3px"></div><svg class="a" style="left:273px;top:746px" width="18" height="18" viewBox="0 0 18 18"><path d="M9 1.5 Q9.8 1.5 11 2.8 L16 8 Q17 9.2 15.5 9.8 L12 10.5 Q10.5 11 11 12 L12 13 Q12.5 14.2 11 14.2 L9.5 14 Q8.5 14 8.5 15.2 Q8.2 16.5 7 16 Q5.8 15.5 6.5 14 Q7 12.5 5.5 12 L3 11.3 Q1 10.8 2.5 9 L7 2.8 Q8 1.5 9 1.5Z" fill="#000"/><path d="M9 3 L5.5 7 Q8 6 10.5 4.5Z" fill="#fff" opacity="0.9"/><circle cx="13.5" cy="12.5" r="0.9" fill="#000"/></svg><div class="t" style="left:298.70px;top:747.57px;font-size:13.5px;color:#c4c4c4;letter-spacing:1.179px;font-family:'Liberation Sans',sans-serif;">New document 1 – Inks…</div>
<div class="a" style="left:494px;top:742px;width:222px;height:25px;background:#4a4a4a;border:1px solid #555;border-top-color:#5a5a5a;border-radius:3px"></div><svg class="a" style="left:500px;top:746px" width="14" height="18" viewBox="0 0 14 18"><path d="M1 1 H9 L13 5 V17 H1Z" fill="#f4f4f4" stroke="#666" stroke-width="0.8"/><path d="M3 6H9M3 8.5H11M3 11H6" stroke="#888" stroke-width="0.8"/><rect x="6" y="10" width="5" height="5" fill="#3a78c8"/></svg><div class="t" style="left:524.00px;top:747.57px;font-size:13.5px;color:#c4c4c4;letter-spacing:0.793px;font-family:'Liberation Sans',sans-serif;">INKSCAPE#1.odt – Open…</div>
<div class="a" style="left:929px;top:742px;width:32px;height:24px;background:#40b0f0;border:1px solid #f4faff"></div>
<svg class="a" style="left:936px;top:745px" width="18" height="18" viewBox="0 0 18 18"><path d="M9 1.5 Q9.8 1.5 11 2.8 L16 8 Q17 9.2 15.5 9.8 L12 10.5 Q10.5 11 11 12 L12 13 Q12.5 14.2 11 14.2 L9.5 14 Q8.5 14 8.5 15.2 Q8.2 16.5 7 16 Q5.8 15.5 6.5 14 Q7 12.5 5.5 12 L3 11.3 Q1 10.8 2.5 9 L7 2.8 Q8 1.5 9 1.5Z" fill="#000"/><path d="M9 3 L5.5 7 Q8 6 10.5 4.5Z" fill="#fff" opacity="0.9"/><circle cx="13.5" cy="12.5" r="0.9" fill="#000"/></svg>
<div class="a" style="left:961px;top:742px;width:33px;height:24px;background:#383838;border-radius:0 0 4px 0"></div>
<svg class="a" style="left:999px;top:740px" width="22" height="26" viewBox="0 0 22 26"><defs><linearGradient id="tr" x1="0" x2="1"><stop offset="0" stop-color="#888"/><stop offset="0.4" stop-color="#f0f0f0"/><stop offset="1" stop-color="#999"/></linearGradient></defs><path d="M3 7 L5 24 H17 L19 7Z" fill="url(#tr)" stroke="#666" stroke-width="0.8"/><ellipse cx="11" cy="6.5" rx="9" ry="3" fill="#ddd" stroke="#888" stroke-width="0.8"/><path d="M7 4 Q11 0 15 4" fill="#eee" stroke="#999" stroke-width="0.6"/><path d="M8 16 L11 12 L14 16 Z" fill="none" stroke="#777" stroke-width="1"/></svg>
</body></html>
